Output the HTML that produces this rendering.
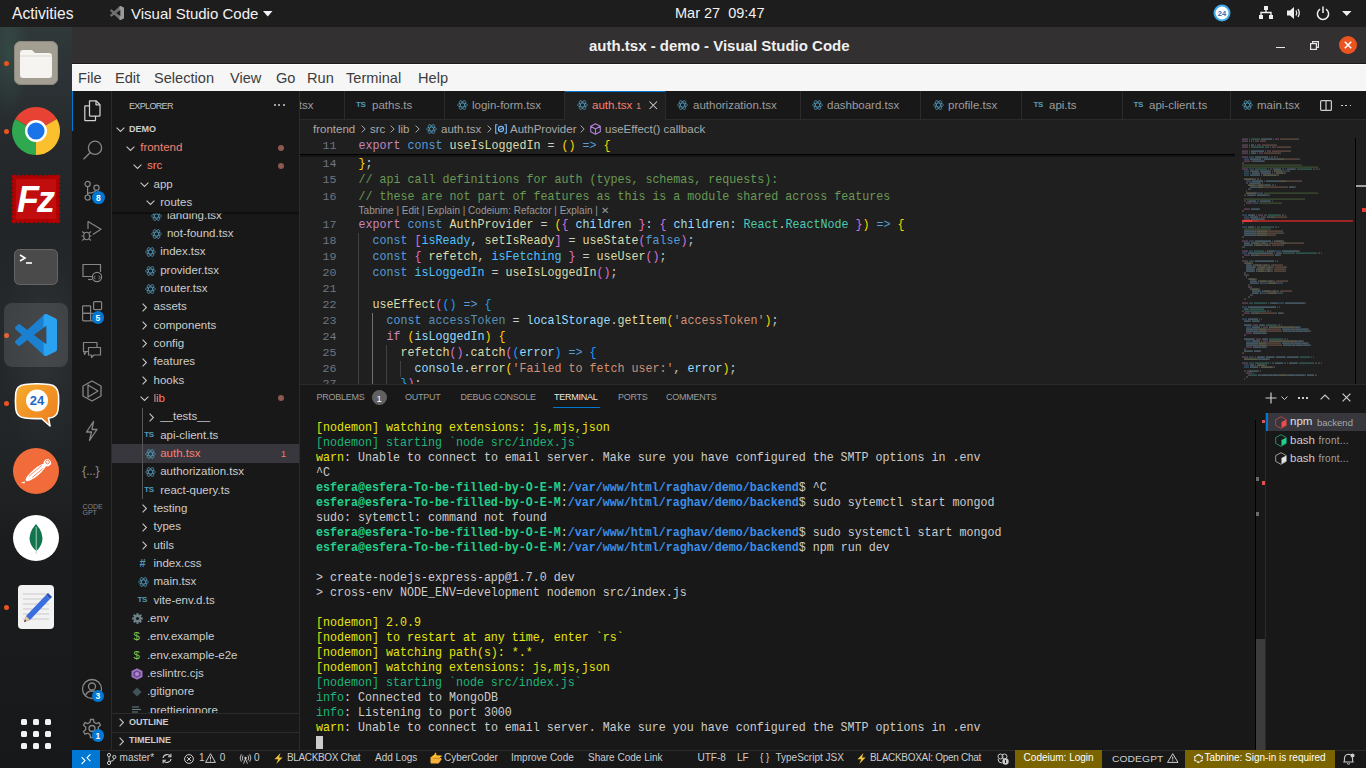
<!DOCTYPE html><html><head><meta charset="utf-8"><style>
html,body{margin:0;padding:0;width:1366px;height:768px;overflow:hidden;background:#1d1d1d;}
.t{position:absolute;white-space:pre;line-height:1;}
.r{position:absolute;}
svg{overflow:visible}
</style></head><body>
<div class="r" style="left:0px;top:0px;width:1366px;height:27px;background:#1d1d1d;"></div>
<div class="t" style="left:12px;top:5.79px;font-size:15.6px;color:#f2f2f2;font-weight:400;font-family:'Liberation Sans', sans-serif;">Activities</div>
<svg class="r" style="left:110px;top:6px;" width="14" height="14" viewBox="0 0 100 100"><defs><clipPath id="vr0"><rect x="68" y="0" width="40" height="100"/></clipPath></defs><path d="M96.46 10.8L75.86.87a6.23 6.23 0 0 0-7.1 1.2L29.35 38.04 12.17 25.01a4.16 4.16 0 0 0-5.31.24L1.35 30.26a4.17 4.17 0 0 0 0 6.16L16.25 50 1.35 63.58a4.17 4.17 0 0 0 0 6.16l5.51 5.01a4.16 4.16 0 0 0 5.31.24l17.18-13.03 39.41 35.96a6.22 6.22 0 0 0 7.1 1.2l20.6-9.92A6.25 6.25 0 0 0 100 83.57V16.43a6.25 6.25 0 0 0-3.54-5.63zM75.02 72.7L45.11 50l29.91-22.7z" fill="#6f6f6f"/><path d="M96.46 10.8L75.86.87a6.23 6.23 0 0 0-7.1 1.2L29.35 38.04 12.17 25.01a4.16 4.16 0 0 0-5.31.24L1.35 30.26a4.17 4.17 0 0 0 0 6.16L16.25 50 1.35 63.58a4.17 4.17 0 0 0 0 6.16l5.51 5.01a4.16 4.16 0 0 0 5.31.24l17.18-13.03 39.41 35.96a6.22 6.22 0 0 0 7.1 1.2l20.6-9.92A6.25 6.25 0 0 0 100 83.57V16.43a6.25 6.25 0 0 0-3.54-5.63zM75.02 72.7L45.11 50l29.91-22.7z" fill="#9a9a9a" clip-path="url(#vr0)"/></svg>
<div class="t" style="left:131px;top:6.3px;font-size:15px;color:#f2f2f2;font-weight:400;font-family:'Liberation Sans', sans-serif;">Visual Studio Code</div>
<svg class="r" style="left:262.5px;top:11px;" width="10" height="6" viewBox="0 0 10 6"><path d="M0 0 H9.5 L4.75 5.5Z" fill="#f2f2f2"/></svg>
<div class="t" style="left:675px;top:6.23px;font-size:14.5px;color:#f2f2f2;font-weight:400;font-family:'Liberation Sans', sans-serif;">Mar 27  09:47</div>
<svg class="r" style="left:1213px;top:4px;" width="18" height="18" viewBox="0 0 18 18"><circle cx="9" cy="9" r="8.5" fill="#3fa9e8"/><circle cx="9" cy="9" r="6.5" fill="#ffffff"/><text x="9" y="12" font-size="7.5" font-weight="700" text-anchor="middle" fill="#1c6fb8" font-family="Liberation Sans">24</text></svg>
<svg class="r" style="left:1259px;top:6px;" width="14" height="14" viewBox="0 0 14 14"><rect x="5" y="0" width="4" height="4" fill="#eee"/><rect x="0" y="9" width="4" height="4" fill="#eee"/><rect x="10" y="9" width="4" height="4" fill="#eee"/><path d="M7 4 V7 M2 9 V6.5 H12 V9" stroke="#eee" stroke-width="1.4" fill="none"/></svg>
<svg class="r" style="left:1287px;top:6px;" width="15" height="14" viewBox="0 0 15 14"><path d="M0 4.5 H3 L7 1 V13 L3 9.5 H0Z" fill="#eee"/><path d="M9 4.5 Q10.5 7 9 9.5 M11 3 Q13.5 7 11 11" stroke="#eee" stroke-width="1.3" fill="none"/></svg>
<svg class="r" style="left:1316px;top:6px;" width="14" height="15" viewBox="0 0 14 15"><path d="M4 3.2 A5.6 5.6 0 1 0 10 3.2" stroke="#eee" stroke-width="1.5" fill="none"/><path d="M7 0.5 V7" stroke="#eee" stroke-width="1.5"/></svg>
<svg class="r" style="left:1341.5px;top:11px;" width="10" height="6" viewBox="0 0 10 6"><path d="M0 0 H9.5 L4.75 5Z" fill="#eee"/></svg>
<div class="r" style="left:0;top:27px;width:72px;height:741px;background:linear-gradient(180deg,#30383a 0px,#2c3235 50px,#25292c 120px,#222528 200px,#25292b 300px,#222527 420px,#1b1c1d 520px,#171819 741px);"></div>
<div class="r" style="left:0;top:27px;width:30px;height:90px;background:radial-gradient(ellipse at 30% 30%,rgba(60,110,90,0.35),rgba(0,0,0,0) 70%);"></div>
<div class="r" style="left:0;top:260px;width:72px;height:200px;background:radial-gradient(ellipse at 60% 45%,rgba(120,125,125,0.12),rgba(0,0,0,0) 70%);"></div>
<div class="r" style="left:4px;top:61px;width:5px;height:5px;border-radius:50%;background:#e95420"></div>
<div class="r" style="left:4px;top:129px;width:5px;height:5px;border-radius:50%;background:#e95420"></div>
<div class="r" style="left:4px;top:333px;width:5px;height:5px;border-radius:50%;background:#e95420"></div>
<div class="r" style="left:4px;top:401px;width:5px;height:5px;border-radius:50%;background:#e95420"></div>
<div class="r" style="left:4px;top:605px;width:5px;height:5px;border-radius:50%;background:#e95420"></div>
<svg class="r" style="left:14px;top:41px;" width="44" height="44" viewBox="0 0 44 44"><rect x="0" y="0" width="44" height="44" rx="7" fill="#a39e92"/><rect x="0.5" y="0.5" width="43" height="43" rx="6.5" fill="none" stroke="#8d887c"/><path d="M6 12 Q6 9 9 9 H18 L21 12 H35 Q38 12 38 15 V34 Q38 37 35 37 H9 Q6 37 6 34Z" fill="#f6f4f0"/><path d="M6 15 H38" stroke="#dcd8d0" stroke-width="1"/></svg>
<svg class="r" style="left:12px;top:107px;" width="48" height="48" viewBox="0 0 48 48"><path d="M24 24 L3.22 12.00 A24 24 0 0 1 44.78 12.00 Z" fill="#e84235"/><path d="M24 24 L44.78 12.00 A24 24 0 0 1 24.00 48.00 Z" fill="#fbc02d"/><path d="M24 24 L24.00 48.00 A24 24 0 0 1 3.22 12.00 Z" fill="#2fa84f"/><path d="M24 13 L44.8 12 L43 18 Z" fill="#e84235" opacity="0"/><circle cx="24" cy="24" r="11" fill="#ffffff"/><circle cx="24" cy="24" r="8.6" fill="#1a73e8"/></svg>
<svg class="r" style="left:12px;top:175px;" width="48" height="48" viewBox="0 0 48 48"><rect x="2" y="2" width="44" height="44" fill="#b30000"/><circle cx="2.0" cy="2" r="2.2" fill="#b30000"/><circle cx="2.0" cy="46" r="2.2" fill="#b30000"/><circle cx="2" cy="2.0" r="2.2" fill="#b30000"/><circle cx="46" cy="2.0" r="2.2" fill="#b30000"/><circle cx="6.4" cy="2" r="2.2" fill="#b30000"/><circle cx="6.4" cy="46" r="2.2" fill="#b30000"/><circle cx="2" cy="6.4" r="2.2" fill="#b30000"/><circle cx="46" cy="6.4" r="2.2" fill="#b30000"/><circle cx="10.8" cy="2" r="2.2" fill="#b30000"/><circle cx="10.8" cy="46" r="2.2" fill="#b30000"/><circle cx="2" cy="10.8" r="2.2" fill="#b30000"/><circle cx="46" cy="10.8" r="2.2" fill="#b30000"/><circle cx="15.2" cy="2" r="2.2" fill="#b30000"/><circle cx="15.2" cy="46" r="2.2" fill="#b30000"/><circle cx="2" cy="15.2" r="2.2" fill="#b30000"/><circle cx="46" cy="15.2" r="2.2" fill="#b30000"/><circle cx="19.6" cy="2" r="2.2" fill="#b30000"/><circle cx="19.6" cy="46" r="2.2" fill="#b30000"/><circle cx="2" cy="19.6" r="2.2" fill="#b30000"/><circle cx="46" cy="19.6" r="2.2" fill="#b30000"/><circle cx="24.0" cy="2" r="2.2" fill="#b30000"/><circle cx="24.0" cy="46" r="2.2" fill="#b30000"/><circle cx="2" cy="24.0" r="2.2" fill="#b30000"/><circle cx="46" cy="24.0" r="2.2" fill="#b30000"/><circle cx="28.4" cy="2" r="2.2" fill="#b30000"/><circle cx="28.4" cy="46" r="2.2" fill="#b30000"/><circle cx="2" cy="28.4" r="2.2" fill="#b30000"/><circle cx="46" cy="28.4" r="2.2" fill="#b30000"/><circle cx="32.8" cy="2" r="2.2" fill="#b30000"/><circle cx="32.8" cy="46" r="2.2" fill="#b30000"/><circle cx="2" cy="32.8" r="2.2" fill="#b30000"/><circle cx="46" cy="32.8" r="2.2" fill="#b30000"/><circle cx="37.2" cy="2" r="2.2" fill="#b30000"/><circle cx="37.2" cy="46" r="2.2" fill="#b30000"/><circle cx="2" cy="37.2" r="2.2" fill="#b30000"/><circle cx="46" cy="37.2" r="2.2" fill="#b30000"/><circle cx="41.6" cy="2" r="2.2" fill="#b30000"/><circle cx="41.6" cy="46" r="2.2" fill="#b30000"/><circle cx="2" cy="41.6" r="2.2" fill="#b30000"/><circle cx="46" cy="41.6" r="2.2" fill="#b30000"/><circle cx="46.0" cy="2" r="2.2" fill="#b30000"/><circle cx="46.0" cy="46" r="2.2" fill="#b30000"/><circle cx="2" cy="46.0" r="2.2" fill="#b30000"/><circle cx="46" cy="46.0" r="2.2" fill="#b30000"/><rect x="4" y="4" width="40" height="40" fill="#c10d0d"/></svg>
<div class="t" style="left:17px;top:182px;font-size:36px;font-weight:700;font-style:italic;color:#fff;font-family:'Liberation Sans', sans-serif;letter-spacing:-2px;line-height:1">Fz</div>
<svg class="r" style="left:14px;top:249px;" width="44" height="36" viewBox="0 0 44 36"><rect x="0.5" y="0.5" width="43" height="35" rx="5" fill="#4a4a4a" stroke="#666" stroke-width="1"/><path d="M6 6 L11 9 L6 12" stroke="#fff" stroke-width="1.6" fill="none"/><path d="M12 14 H18" stroke="#fff" stroke-width="1.6"/></svg>
<div class="r" style="left:4px;top:303px;width:64px;height:64px;border-radius:8px;background:rgba(190,195,200,0.16)"></div>
<svg class="r" style="left:15px;top:314px;" width="42" height="42" viewBox="0 0 100 100"><defs><clipPath id="vr"><rect x="68" y="0" width="40" height="100"/></clipPath></defs><path d="M96.46 10.8L75.86.87a6.23 6.23 0 0 0-7.1 1.2L29.35 38.04 12.17 25.01a4.16 4.16 0 0 0-5.31.24L1.35 30.26a4.17 4.17 0 0 0 0 6.16L16.25 50 1.35 63.58a4.17 4.17 0 0 0 0 6.16l5.51 5.01a4.16 4.16 0 0 0 5.31.24l17.18-13.03 39.41 35.96a6.22 6.22 0 0 0 7.1 1.2l20.6-9.92A6.25 6.25 0 0 0 100 83.57V16.43a6.25 6.25 0 0 0-3.54-5.63zM75.02 72.7L45.11 50l29.91-22.7z" fill="#1b80d0"/><path d="M96.46 10.8L75.86.87a6.23 6.23 0 0 0-7.1 1.2L29.35 38.04 12.17 25.01a4.16 4.16 0 0 0-5.31.24L1.35 30.26a4.17 4.17 0 0 0 0 6.16L16.25 50 1.35 63.58a4.17 4.17 0 0 0 0 6.16l5.51 5.01a4.16 4.16 0 0 0 5.31.24l17.18-13.03 39.41 35.96a6.22 6.22 0 0 0 7.1 1.2l20.6-9.92A6.25 6.25 0 0 0 100 83.57V16.43a6.25 6.25 0 0 0-3.54-5.63zM75.02 72.7L45.11 50l29.91-22.7z" fill="#2aa2f0" clip-path="url(#vr)"/></svg>
<svg class="r" style="left:14px;top:383px;" width="46" height="45" viewBox="0 0 46 45"><defs><linearGradient id="bx" x1="0" y1="0" x2="1" y2="1"><stop offset="0" stop-color="#f6ad2e"/><stop offset="1" stop-color="#ec7a1c"/></linearGradient></defs><path d="M11 1.5 Q23 0 35 1.5 Q44 2.5 44.5 12 Q45 20 44 27 Q43 34.5 35 35 L34.5 35 L36 43 L27.5 35.5 Q19 36 11 35 Q2.5 34 1.8 26 Q1 18 1.8 10 Q2.5 2.5 11 1.5Z" fill="url(#bx)" stroke="#fff" stroke-width="1.6" stroke-linejoin="round"/><circle cx="23" cy="17.5" r="11" fill="#fff"/><text x="23" y="22.3" font-size="13" font-weight="700" text-anchor="middle" fill="#1f66c1" font-family="Liberation Sans">24</text></svg>
<svg class="r" style="left:13px;top:448px;" width="46" height="46" viewBox="0 0 46 46"><circle cx="23" cy="23" r="23" fill="#f26b3a"/><g transform="rotate(-40 23 23)"><ellipse cx="22" cy="24" rx="13" ry="3.6" fill="#fff"/><path d="M8 24 L4 22 L6 25 Z" fill="#fff"/><circle cx="37" cy="24" r="3.6" fill="#fff"/><circle cx="37.6" cy="23.5" r="1.8" fill="none" stroke="#f26b3a" stroke-width="0.8"/><path d="M14 22.5 H31 M16 25.5 H30" stroke="#f26b3a" stroke-width="0.7"/></g></svg>
<svg class="r" style="left:13px;top:515px;" width="46" height="46" viewBox="0 0 46 46"><circle cx="23" cy="23" r="23" fill="#ffffff"/><path d="M23 9 Q31 18 29 27 Q27 33 23.5 36 Q19 33 17 27 Q15 18 23 9Z" fill="#10744d"/><path d="M23.2 12 V39" stroke="#b7d5c0" stroke-width="0.9"/></svg>
<svg class="r" style="left:18px;top:585px;" width="36" height="44" viewBox="0 0 36 44"><rect x="0" y="0" width="36" height="44" rx="4" fill="#f2f2f2"/><g stroke="#c9c9c9" stroke-width="1"><path d="M5 9 H31 M5 14 H31 M5 19 H31 M5 24 H31 M5 29 H31 M5 34 H31"/></g><path d="M6 37 L8 31 L28 10 L32 14 L12 35 Z" fill="#3b6fe0"/><path d="M28 10 L32 14 L34 12 L30 8Z" fill="#2a4fb0"/><path d="M6 37 L8 31 L12 35Z" fill="#f2c89a"/><path d="M6 37 L7 34.5 L8.5 36Z" fill="#333"/></svg>
<div class="r" style="left:20.80px;top:718.80px;width:6.3px;height:6.3px;border-radius:1.5px;background:#f2f2f2"></div>
<div class="r" style="left:32.85px;top:718.80px;width:6.3px;height:6.3px;border-radius:1.5px;background:#f2f2f2"></div>
<div class="r" style="left:44.90px;top:718.80px;width:6.3px;height:6.3px;border-radius:1.5px;background:#f2f2f2"></div>
<div class="r" style="left:20.80px;top:730.90px;width:6.3px;height:6.3px;border-radius:1.5px;background:#f2f2f2"></div>
<div class="r" style="left:32.85px;top:730.90px;width:6.3px;height:6.3px;border-radius:1.5px;background:#f2f2f2"></div>
<div class="r" style="left:44.90px;top:730.90px;width:6.3px;height:6.3px;border-radius:1.5px;background:#f2f2f2"></div>
<div class="r" style="left:20.80px;top:743.00px;width:6.3px;height:6.3px;border-radius:1.5px;background:#f2f2f2"></div>
<div class="r" style="left:32.85px;top:743.00px;width:6.3px;height:6.3px;border-radius:1.5px;background:#f2f2f2"></div>
<div class="r" style="left:44.90px;top:743.00px;width:6.3px;height:6.3px;border-radius:1.5px;background:#f2f2f2"></div>
<div class="r" style="left:72px;top:27px;width:1294px;height:36px;background:#323030;"></div>
<div class="r" style="left:72px;top:63px;width:1294px;height:1px;background:#1c1c1c;"></div>
<div class="t" style="left:589px;top:38.3px;font-size:15px;color:#f0f0f0;font-weight:700;font-family:'Liberation Sans', sans-serif;">auth.tsx - demo - Visual Studio Code</div>
<div class="r" style="left:1276px;top:47px;width:8.5px;height:1.2px;background:#e6e6e6;"></div>
<svg class="r" style="left:1310px;top:41px;" width="9" height="9" viewBox="0 0 9 9"><rect x="0.6" y="2.6" width="5.8" height="5.8" fill="none" stroke="#e6e6e6" stroke-width="1.2"/><path d="M2.6 2.4 V0.6 H8.4 V6.4 H6.6" fill="none" stroke="#e6e6e6" stroke-width="1.2"/></svg>
<svg class="r" style="left:1339px;top:36px;" width="18" height="18" viewBox="0 0 18 18"><circle cx="9" cy="9" r="9" fill="#e95420"/><path d="M5.8 5.8 L12.2 12.2 M12.2 5.8 L5.8 12.2" stroke="#fff" stroke-width="1.6"/></svg>
<div class="r" style="left:72px;top:64px;width:1294px;height:27px;background:#f6f6f6;"></div>
<div class="r" style="left:72px;top:64px;width:1294px;height:1px;background:#ffffff;"></div>
<div class="t" style="left:78px;top:70.64px;font-size:14.6px;color:#3c3c3c;font-weight:400;font-family:'Liberation Sans', sans-serif;">File</div>
<div class="t" style="left:115px;top:70.64px;font-size:14.6px;color:#3c3c3c;font-weight:400;font-family:'Liberation Sans', sans-serif;">Edit</div>
<div class="t" style="left:154px;top:70.64px;font-size:14.6px;color:#3c3c3c;font-weight:400;font-family:'Liberation Sans', sans-serif;">Selection</div>
<div class="t" style="left:230px;top:70.64px;font-size:14.6px;color:#3c3c3c;font-weight:400;font-family:'Liberation Sans', sans-serif;">View</div>
<div class="t" style="left:276px;top:70.64px;font-size:14.6px;color:#3c3c3c;font-weight:400;font-family:'Liberation Sans', sans-serif;">Go</div>
<div class="t" style="left:307px;top:70.64px;font-size:14.6px;color:#3c3c3c;font-weight:400;font-family:'Liberation Sans', sans-serif;">Run</div>
<div class="t" style="left:346px;top:70.64px;font-size:14.6px;color:#3c3c3c;font-weight:400;font-family:'Liberation Sans', sans-serif;">Terminal</div>
<div class="t" style="left:418px;top:70.64px;font-size:14.6px;color:#3c3c3c;font-weight:400;font-family:'Liberation Sans', sans-serif;">Help</div>
<div class="r" style="left:72px;top:91px;width:1294px;height:659px;background:#181818;"></div>
<div class="r" style="left:72px;top:91px;width:40px;height:659px;background:#181818;"></div>
<div class="r" style="left:111px;top:91px;width:1px;height:659px;background:#2b2b2b;"></div>
<div class="r" style="left:72px;top:91px;width:1.2px;height:40px;background:#0078d4;"></div>
<svg class="r" style="left:81.0px;top:100.0px;" width="22" height="22" viewBox="0 0 22 22"><g fill="none" stroke="#d0d0d0" stroke-width="1.25" stroke-linejoin="round"><path d="M8.5 0.8 H15 L19 4.8 V15.5 Q19 16 18.5 16 H9 Q8.5 16 8.5 15.5 Z"/><path d="M15 0.8 V4.8 H19"/><path d="M8.5 5.8 H4.3 Q3.8 5.8 3.8 6.3 V20.2 Q3.8 20.7 4.3 20.7 H14 Q14.5 20.7 14.5 20.2 V16"/></g></svg>
<svg class="r" style="left:81.0px;top:139.0px;" width="22" height="22" viewBox="0 0 22 22"><g fill="none" stroke="#868686" stroke-width="1.3"><circle cx="14" cy="8.8" r="6.6"/><path d="M9.3 13.5 L2.5 20.3"/></g></svg>
<svg class="r" style="left:81.0px;top:180.0px;" width="22" height="22" viewBox="0 0 22 22"><g fill="none" stroke="#868686" stroke-width="1.2"><circle cx="6.6" cy="4" r="2.6"/><circle cx="6.6" cy="17.6" r="2.6"/><circle cx="15.5" cy="7.7" r="2.6"/><path d="M6.6 6.6 V15"/><path d="M15 10.3 Q14 13 6.8 13.2"/></g></svg>
<svg class="r" style="left:81.0px;top:220.0px;" width="22" height="22" viewBox="0 0 22 22"><g fill="none" stroke="#868686" stroke-width="1.2" stroke-linejoin="round"><path d="M7 9 V1.5 L20 9.3 L11.8 14.5"/></g><g fill="none" stroke="#868686" stroke-width="1.1"><ellipse cx="5.6" cy="16" rx="2.9" ry="3.8"/><path d="M2.7 16 H0.6 M8.5 16 H10.6 M3 13 L1.2 11.5 M8.2 13 L10 11.5 M3 19 L1.2 20.5 M8.2 19 L10 20.5"/></g></svg>
<svg class="r" style="left:81.0px;top:262.0px;" width="22" height="22" viewBox="0 0 22 22"><g fill="none" stroke="#868686" stroke-width="1.2"><path d="M11 14.5 H2 V2.5 H19.5 V10"/><path d="M7 17.5 H11"/><circle cx="16" cy="15" r="4.6"/><path d="M14.3 13.8 L13 15.5 L14.3 17.2 M17.7 13.8 L19 15.5 L17.7 17.2" stroke-width="1"/></g></svg>
<svg class="r" style="left:81.0px;top:300.0px;" width="22" height="22" viewBox="0 0 22 22"><g fill="none" stroke="#868686" stroke-width="1.2"><rect x="1.6" y="5.8" width="8" height="7.5" rx="0.8"/><rect x="1.6" y="13.3" width="8" height="7.5" rx="0.8"/><rect x="9.6" y="13.3" width="7" height="7.5" rx="0.8"/><rect x="12.6" y="1.6" width="8" height="8" rx="1"/></g></svg>
<svg class="r" style="left:81.0px;top:340.0px;" width="22" height="22" viewBox="0 0 22 22"><g fill="none" stroke="#868686" stroke-width="1.2" stroke-linejoin="round"><path d="M7 11.5 H2.5 V2.5 H16 V7"/><path d="M3 11.5 L3.5 14.5 L5.5 11.5"/><path d="M7.5 7.5 H19.5 V15 H13 L10.5 17.5 V15 H7.5 Z"/></g></svg>
<svg class="r" style="left:81.0px;top:380.0px;" width="22" height="22" viewBox="0 0 22 22"><g fill="none" stroke="#868686" stroke-width="1.3" stroke-linejoin="round"><path d="M11 1 L20 6 V16 L11 21 L2 16 V6 Z"/><path d="M7 5 L17 11 L7 17 Z"/></g></svg>
<svg class="r" style="left:81.0px;top:420.0px;" width="22" height="22" viewBox="0 0 22 22"><path d="M12.5 1.5 L5.5 12 H10.5 L8.5 20.5 L16 9.5 H11 Z" fill="none" stroke="#868686" stroke-width="1.3" stroke-linejoin="round"/></svg>
<div class="t" style="left:82px;top:463.5px;font-size:13.5px;color:#868686;font-family:'Liberation Sans', sans-serif;letter-spacing:-0.6px">{...}</div>
<div class="t" style="left:82.5px;top:503.5px;font-size:7px;font-weight:400;color:#868686;font-family:'Liberation Sans', sans-serif;line-height:6.5px;letter-spacing:0px;transform:scaleX(1.0);transform-origin:left">CODE<br>GPT</div>
<svg class="r" style="left:81.0px;top:678.0px;" width="22" height="22" viewBox="0 0 22 22"><g fill="none" stroke="#868686" stroke-width="1.3"><circle cx="11" cy="11" r="9.5"/><circle cx="11" cy="8.5" r="3.5"/><path d="M4.5 17.5 Q6 13 11 13 Q16 13 17.5 17.5"/></g></svg>
<svg class="r" style="left:81.0px;top:718.0px;" width="22" height="22" viewBox="0 0 22 22"><g fill="none" stroke="#868686" stroke-width="1.3"><path d="M9.5 1.5 H12.5 L13 4.3 L15.3 5.6 L18 4.6 L19.5 7.2 L17.3 9 V11.7 L19.5 13.5 L18 16.1 L15.3 15.1 L13 16.4 L12.5 19.5 H9.5 L9 16.4 L6.7 15.1 L4 16.1 L2.5 13.5 L4.7 11.7 V9 L2.5 7.2 L4 4.6 L6.7 5.6 L9 4.3 Z"/><circle cx="11" cy="10.5" r="3"/></g></svg>
<div class="r" style="left:92.1px;top:191.1px;width:12.8px;height:12.8px;border-radius:50%;background:#0078d4"></div>
<div class="t" style="left:96.0px;top:193.5px;font-size:8.5px;color:#ffffff;font-weight:700;font-family:'Liberation Sans', sans-serif;">8</div>
<div class="r" style="left:91.6px;top:311.1px;width:12.8px;height:12.8px;border-radius:50%;background:#0078d4"></div>
<div class="t" style="left:95.5px;top:313.5px;font-size:8.5px;color:#ffffff;font-weight:700;font-family:'Liberation Sans', sans-serif;">5</div>
<div class="r" style="left:91.6px;top:689.6px;width:12.8px;height:12.8px;border-radius:50%;background:#0078d4"></div>
<div class="t" style="left:95.5px;top:692.0px;font-size:8.5px;color:#ffffff;font-weight:700;font-family:'Liberation Sans', sans-serif;">3</div>
<div class="r" style="left:91.6px;top:729.1px;width:12.8px;height:12.8px;border-radius:50%;background:#0078d4"></div>
<div class="t" style="left:95.5px;top:731.5px;font-size:8.5px;color:#ffffff;font-weight:700;font-family:'Liberation Sans', sans-serif;">1</div>
<div class="t" style="left:129px;top:101.68px;font-size:9px;color:#c4c4c4;font-weight:400;font-family:'Liberation Sans', sans-serif;letter-spacing:-0.65px">EXPLORER</div>
<div class="r" style="left:274.3px;top:104.3px;width:2px;height:2px;background:#cccccc;border-radius:1px"></div>
<div class="r" style="left:278.40000000000003px;top:104.3px;width:2px;height:2px;background:#cccccc;border-radius:1px"></div>
<div class="r" style="left:282.5px;top:104.3px;width:2px;height:2px;background:#cccccc;border-radius:1px"></div>
<svg class="r" style="left:116px;top:127px;" width="9" height="5" viewBox="0 0 9 5"><path d="M0.6 0.6 L4.5 4.4 L8.4 0.6" fill="none" stroke="#c5c5c5" stroke-width="1.1"/></svg>
<div class="t" style="left:129px;top:125.18px;font-size:9px;color:#cccccc;font-weight:700;font-family:'Liberation Sans', sans-serif;">DEMO</div>
<div class="r" style="left:112px;top:212px;width:187px;height:501px;overflow:hidden">
<svg class="r" style="left:39.40px;top:-1.43px" width="11" height="10" viewBox="0 0 11 10"><g fill="none" stroke="#4f94b4" stroke-width="0.75"><ellipse cx="5.5" cy="5" rx="5" ry="2"/><ellipse cx="5.5" cy="5" rx="5" ry="2" transform="rotate(60 5.5 5)"/><ellipse cx="5.5" cy="5" rx="5" ry="2" transform="rotate(-60 5.5 5)"/></g></svg>
<div class="t" style="left:54.90px;top:-2.46px;font-size:11.5px;color:#cccccc;font-weight:400;font-family:'Liberation Sans', sans-serif;">landing.tsx</div>
<svg class="r" style="left:39.40px;top:16.90px" width="11" height="10" viewBox="0 0 11 10"><g fill="none" stroke="#4f94b4" stroke-width="0.75"><ellipse cx="5.5" cy="5" rx="5" ry="2"/><ellipse cx="5.5" cy="5" rx="5" ry="2" transform="rotate(60 5.5 5)"/><ellipse cx="5.5" cy="5" rx="5" ry="2" transform="rotate(-60 5.5 5)"/></g></svg>
<div class="t" style="left:54.90px;top:15.87px;font-size:11.5px;color:#cccccc;font-weight:400;font-family:'Liberation Sans', sans-serif;">not-found.tsx</div>
<svg class="r" style="left:32.70px;top:35.24px" width="11" height="10" viewBox="0 0 11 10"><g fill="none" stroke="#4f94b4" stroke-width="0.75"><ellipse cx="5.5" cy="5" rx="5" ry="2"/><ellipse cx="5.5" cy="5" rx="5" ry="2" transform="rotate(60 5.5 5)"/><ellipse cx="5.5" cy="5" rx="5" ry="2" transform="rotate(-60 5.5 5)"/></g></svg>
<div class="t" style="left:48.20px;top:34.20px;font-size:11.5px;color:#cccccc;font-weight:400;font-family:'Liberation Sans', sans-serif;">index.tsx</div>
<svg class="r" style="left:32.70px;top:53.57px" width="11" height="10" viewBox="0 0 11 10"><g fill="none" stroke="#4f94b4" stroke-width="0.75"><ellipse cx="5.5" cy="5" rx="5" ry="2"/><ellipse cx="5.5" cy="5" rx="5" ry="2" transform="rotate(60 5.5 5)"/><ellipse cx="5.5" cy="5" rx="5" ry="2" transform="rotate(-60 5.5 5)"/></g></svg>
<div class="t" style="left:48.20px;top:52.53px;font-size:11.5px;color:#cccccc;font-weight:400;font-family:'Liberation Sans', sans-serif;">provider.tsx</div>
<svg class="r" style="left:32.70px;top:71.90px" width="11" height="10" viewBox="0 0 11 10"><g fill="none" stroke="#4f94b4" stroke-width="0.75"><ellipse cx="5.5" cy="5" rx="5" ry="2"/><ellipse cx="5.5" cy="5" rx="5" ry="2" transform="rotate(60 5.5 5)"/><ellipse cx="5.5" cy="5" rx="5" ry="2" transform="rotate(-60 5.5 5)"/></g></svg>
<div class="t" style="left:48.20px;top:70.87px;font-size:11.5px;color:#cccccc;font-weight:400;font-family:'Liberation Sans', sans-serif;">router.tsx</div>
<svg class="r" style="left:30.00px;top:90.74px" width="5" height="9" viewBox="0 0 5 9"><path d="M0.6 0.6 L4.4 4.5 L0.6 8.4" fill="none" stroke="#c5c5c5" stroke-width="1.1"/></svg>
<div class="t" style="left:41.50px;top:89.20px;font-size:11.5px;color:#cccccc;font-weight:400;font-family:'Liberation Sans', sans-serif;">assets</div>
<svg class="r" style="left:30.00px;top:109.07px" width="5" height="9" viewBox="0 0 5 9"><path d="M0.6 0.6 L4.4 4.5 L0.6 8.4" fill="none" stroke="#c5c5c5" stroke-width="1.1"/></svg>
<div class="t" style="left:41.50px;top:107.53px;font-size:11.5px;color:#cccccc;font-weight:400;font-family:'Liberation Sans', sans-serif;">components</div>
<svg class="r" style="left:30.00px;top:127.40px" width="5" height="9" viewBox="0 0 5 9"><path d="M0.6 0.6 L4.4 4.5 L0.6 8.4" fill="none" stroke="#c5c5c5" stroke-width="1.1"/></svg>
<div class="t" style="left:41.50px;top:125.87px;font-size:11.5px;color:#cccccc;font-weight:400;font-family:'Liberation Sans', sans-serif;">config</div>
<svg class="r" style="left:30.00px;top:145.73px" width="5" height="9" viewBox="0 0 5 9"><path d="M0.6 0.6 L4.4 4.5 L0.6 8.4" fill="none" stroke="#c5c5c5" stroke-width="1.1"/></svg>
<div class="t" style="left:41.50px;top:144.20px;font-size:11.5px;color:#cccccc;font-weight:400;font-family:'Liberation Sans', sans-serif;">features</div>
<svg class="r" style="left:30.00px;top:164.07px" width="5" height="9" viewBox="0 0 5 9"><path d="M0.6 0.6 L4.4 4.5 L0.6 8.4" fill="none" stroke="#c5c5c5" stroke-width="1.1"/></svg>
<div class="t" style="left:41.50px;top:162.53px;font-size:11.5px;color:#cccccc;font-weight:400;font-family:'Liberation Sans', sans-serif;">hooks</div>
<svg class="r" style="left:27.50px;top:184.40px" width="9" height="5" viewBox="0 0 9 5"><path d="M0.6 0.6 L4.5 4.4 L8.4 0.6" fill="none" stroke="#c5c5c5" stroke-width="1.1"/></svg>
<div class="t" style="left:41.50px;top:180.87px;font-size:11.5px;color:#f88070;font-weight:400;font-family:'Liberation Sans', sans-serif;">lib</div>
<div class="r" style="left:166px;top:183.40px;width:6px;height:6px;border-radius:50%;background:#8c5850"></div>
<svg class="r" style="left:36.70px;top:200.73px" width="5" height="9" viewBox="0 0 5 9"><path d="M0.6 0.6 L4.4 4.5 L0.6 8.4" fill="none" stroke="#c5c5c5" stroke-width="1.1"/></svg>
<div class="t" style="left:48.20px;top:199.20px;font-size:11.5px;color:#cccccc;font-weight:400;font-family:'Liberation Sans', sans-serif;">__tests__</div>
<div class="t" style="left:32.20px;top:219.07px;font-size:8px;font-weight:700;color:#519aba;font-family:'Liberation Sans', sans-serif;letter-spacing:-0.3px">TS</div>
<div class="t" style="left:48.20px;top:217.53px;font-size:11.5px;color:#cccccc;font-weight:400;font-family:'Liberation Sans', sans-serif;">api-client.ts</div>
<div class="r" style="left:0px;top:232.40px;width:187px;height:18.33px;background:#37373d"></div>
<div class="t" style="left:169.00px;top:237.98px;font-size:9px;color:#f88070;font-weight:400;font-family:'Liberation Sans', sans-serif;">1</div>
<svg class="r" style="left:32.70px;top:236.90px" width="11" height="10" viewBox="0 0 11 10"><g fill="none" stroke="#4f94b4" stroke-width="0.75"><ellipse cx="5.5" cy="5" rx="5" ry="2"/><ellipse cx="5.5" cy="5" rx="5" ry="2" transform="rotate(60 5.5 5)"/><ellipse cx="5.5" cy="5" rx="5" ry="2" transform="rotate(-60 5.5 5)"/></g></svg>
<div class="t" style="left:48.20px;top:235.86px;font-size:11.5px;color:#f88070;font-weight:400;font-family:'Liberation Sans', sans-serif;">auth.tsx</div>
<svg class="r" style="left:32.70px;top:255.23px" width="11" height="10" viewBox="0 0 11 10"><g fill="none" stroke="#4f94b4" stroke-width="0.75"><ellipse cx="5.5" cy="5" rx="5" ry="2"/><ellipse cx="5.5" cy="5" rx="5" ry="2" transform="rotate(60 5.5 5)"/><ellipse cx="5.5" cy="5" rx="5" ry="2" transform="rotate(-60 5.5 5)"/></g></svg>
<div class="t" style="left:48.20px;top:254.20px;font-size:11.5px;color:#cccccc;font-weight:400;font-family:'Liberation Sans', sans-serif;">authorization.tsx</div>
<div class="t" style="left:32.20px;top:274.06px;font-size:8px;font-weight:700;color:#519aba;font-family:'Liberation Sans', sans-serif;letter-spacing:-0.3px">TS</div>
<div class="t" style="left:48.20px;top:272.53px;font-size:11.5px;color:#cccccc;font-weight:400;font-family:'Liberation Sans', sans-serif;">react-query.ts</div>
<svg class="r" style="left:30.00px;top:292.40px" width="5" height="9" viewBox="0 0 5 9"><path d="M0.6 0.6 L4.4 4.5 L0.6 8.4" fill="none" stroke="#c5c5c5" stroke-width="1.1"/></svg>
<div class="t" style="left:41.50px;top:290.86px;font-size:11.5px;color:#cccccc;font-weight:400;font-family:'Liberation Sans', sans-serif;">testing</div>
<svg class="r" style="left:30.00px;top:310.73px" width="5" height="9" viewBox="0 0 5 9"><path d="M0.6 0.6 L4.4 4.5 L0.6 8.4" fill="none" stroke="#c5c5c5" stroke-width="1.1"/></svg>
<div class="t" style="left:41.50px;top:309.20px;font-size:11.5px;color:#cccccc;font-weight:400;font-family:'Liberation Sans', sans-serif;">types</div>
<svg class="r" style="left:30.00px;top:329.06px" width="5" height="9" viewBox="0 0 5 9"><path d="M0.6 0.6 L4.4 4.5 L0.6 8.4" fill="none" stroke="#c5c5c5" stroke-width="1.1"/></svg>
<div class="t" style="left:41.50px;top:327.53px;font-size:11.5px;color:#cccccc;font-weight:400;font-family:'Liberation Sans', sans-serif;">utils</div>
<div class="t" style="left:27.50px;top:346.29px;font-size:11px;color:#519aba;font-weight:700;font-family:'Liberation Sans', sans-serif;">#</div>
<div class="t" style="left:41.50px;top:345.86px;font-size:11.5px;color:#cccccc;font-weight:400;font-family:'Liberation Sans', sans-serif;">index.css</div>
<svg class="r" style="left:26.00px;top:365.23px" width="11" height="10" viewBox="0 0 11 10"><g fill="none" stroke="#4f94b4" stroke-width="0.75"><ellipse cx="5.5" cy="5" rx="5" ry="2"/><ellipse cx="5.5" cy="5" rx="5" ry="2" transform="rotate(60 5.5 5)"/><ellipse cx="5.5" cy="5" rx="5" ry="2" transform="rotate(-60 5.5 5)"/></g></svg>
<div class="t" style="left:41.50px;top:364.20px;font-size:11.5px;color:#cccccc;font-weight:400;font-family:'Liberation Sans', sans-serif;">main.tsx</div>
<div class="t" style="left:25.50px;top:384.06px;font-size:8px;font-weight:700;color:#519aba;font-family:'Liberation Sans', sans-serif;letter-spacing:-0.3px">TS</div>
<div class="t" style="left:41.50px;top:382.53px;font-size:11.5px;color:#cccccc;font-weight:400;font-family:'Liberation Sans', sans-serif;">vite-env.d.ts</div>
<svg class="r" style="left:19.90px;top:401.40px" width="11" height="11" viewBox="0 0 11 11"><g transform="translate(5.5 5.5)"><circle r="3.8" fill="#6d8086"/><rect x="-1.1" y="-5.3" width="2.2" height="2.4" fill="#6d8086" transform="rotate(0)"/><rect x="-1.1" y="-5.3" width="2.2" height="2.4" fill="#6d8086" transform="rotate(45)"/><rect x="-1.1" y="-5.3" width="2.2" height="2.4" fill="#6d8086" transform="rotate(90)"/><rect x="-1.1" y="-5.3" width="2.2" height="2.4" fill="#6d8086" transform="rotate(135)"/><rect x="-1.1" y="-5.3" width="2.2" height="2.4" fill="#6d8086" transform="rotate(180)"/><rect x="-1.1" y="-5.3" width="2.2" height="2.4" fill="#6d8086" transform="rotate(225)"/><rect x="-1.1" y="-5.3" width="2.2" height="2.4" fill="#6d8086" transform="rotate(270)"/><rect x="-1.1" y="-5.3" width="2.2" height="2.4" fill="#6d8086" transform="rotate(315)"/><circle r="1.6" fill="#181818"/></g></svg>
<div class="t" style="left:34.90px;top:400.86px;font-size:11.5px;color:#cccccc;font-weight:400;font-family:'Liberation Sans', sans-serif;">.env</div>
<div class="t" style="left:21.40px;top:419.19px;font-size:11.5px;color:#8dc149;font-weight:400;font-family:'Liberation Sans', sans-serif;">$</div>
<div class="t" style="left:34.90px;top:419.19px;font-size:11.5px;color:#cccccc;font-weight:400;font-family:'Liberation Sans', sans-serif;">.env.example</div>
<div class="t" style="left:21.40px;top:437.53px;font-size:11.5px;color:#8dc149;font-weight:400;font-family:'Liberation Sans', sans-serif;">$</div>
<div class="t" style="left:34.90px;top:437.53px;font-size:11.5px;color:#cccccc;font-weight:400;font-family:'Liberation Sans', sans-serif;">.env.example-e2e</div>
<svg class="r" style="left:19.40px;top:455.89px" width="12" height="12" viewBox="0 0 12 12"><path d="M6 1.2 L10.6 3.6 V8.4 L6 10.8 L1.4 8.4 V3.6Z" fill="#6a4a8a" stroke="#a074c4" stroke-width="1.8" stroke-linejoin="round"/><circle cx="6" cy="6" r="2" fill="#b28ad6"/></svg>
<div class="t" style="left:34.90px;top:455.86px;font-size:11.5px;color:#cccccc;font-weight:400;font-family:'Liberation Sans', sans-serif;">.eslintrc.cjs</div>
<svg class="r" style="left:19.90px;top:475.23px" width="10" height="10" viewBox="0 0 10 10"><path d="M5 0.5 L9.5 5 L5 9.5 L0.5 5Z" fill="#41535b"/></svg>
<div class="t" style="left:34.90px;top:474.19px;font-size:11.5px;color:#cccccc;font-weight:400;font-family:'Liberation Sans', sans-serif;">.gitignore</div>
<svg class="r" style="left:19.90px;top:494.06px" width="9" height="8" viewBox="0 0 9 8"><path d="M0 1 H7 M0 3.5 H9 M0 6 H6 M0 8 H8" stroke="#6d8086" stroke-width="1"/></svg>
<div class="t" style="left:34.90px;top:492.53px;font-size:11.5px;color:#cccccc;font-weight:400;font-family:'Liberation Sans', sans-serif;">.prettierignore</div>
<div class="r" style="left:30px;top:195.73px;width:1px;height:91.66px;background:#585858"></div>
</div>
<div class="r" style="left:112px;top:138.5px;width:187px;height:73.5px;background:#181818;"></div>
<svg class="r" style="left:126.19999999999999px;top:145.5px;" width="9" height="5" viewBox="0 0 9 5"><path d="M0.6 0.6 L4.5 4.4 L8.4 0.6" fill="none" stroke="#c5c5c5" stroke-width="1.1"/></svg>
<div class="t" style="left:140.2px;top:141.97px;font-size:11.5px;color:#f88070;font-weight:400;font-family:'Liberation Sans', sans-serif;">frontend</div>
<div class="r" style="left:278px;top:144.50px;width:6px;height:6px;border-radius:50%;background:#8c5850"></div>
<svg class="r" style="left:132.9px;top:163.833px;" width="9" height="5" viewBox="0 0 9 5"><path d="M0.6 0.6 L4.5 4.4 L8.4 0.6" fill="none" stroke="#c5c5c5" stroke-width="1.1"/></svg>
<div class="t" style="left:146.9px;top:160.3px;font-size:11.5px;color:#f88070;font-weight:400;font-family:'Liberation Sans', sans-serif;">src</div>
<div class="r" style="left:278px;top:162.83px;width:6px;height:6px;border-radius:50%;background:#8c5850"></div>
<svg class="r" style="left:139.5px;top:182.166px;" width="9" height="5" viewBox="0 0 9 5"><path d="M0.6 0.6 L4.5 4.4 L8.4 0.6" fill="none" stroke="#c5c5c5" stroke-width="1.1"/></svg>
<div class="t" style="left:153.5px;top:178.63px;font-size:11.5px;color:#cccccc;font-weight:400;font-family:'Liberation Sans', sans-serif;">app</div>
<svg class="r" style="left:146.2px;top:200.499px;" width="9" height="5" viewBox="0 0 9 5"><path d="M0.6 0.6 L4.5 4.4 L8.4 0.6" fill="none" stroke="#c5c5c5" stroke-width="1.1"/></svg>
<div class="t" style="left:160.2px;top:196.96px;font-size:11.5px;color:#cccccc;font-weight:400;font-family:'Liberation Sans', sans-serif;">routes</div>
<div class="r" style="left:112px;top:211.5px;width:187px;height:1.2px;background:#0e0e0e;"></div>
<div class="r" style="left:112px;top:212.7px;width:187px;height:1.5px;background:rgba(0,0,0,0.35);"></div>
<div class="r" style="left:112px;top:713.3px;width:187px;height:1px;background:#2b2b2b;"></div>
<div class="r" style="left:112px;top:713.3px;width:187px;height:36.4px;background:#181818;"></div>
<div class="r" style="left:112px;top:713.3px;width:187px;height:1px;background:#2b2b2b;"></div>
<div class="r" style="left:112px;top:731.6px;width:187px;height:1px;background:#2b2b2b;"></div>
<svg class="r" style="left:119px;top:718px;" width="5" height="9" viewBox="0 0 5 9"><path d="M0.6 0.6 L4.4 4.5 L0.6 8.4" fill="none" stroke="#c5c5c5" stroke-width="1.1"/></svg>
<div class="t" style="left:129px;top:717.68px;font-size:9px;color:#cccccc;font-weight:700;font-family:'Liberation Sans', sans-serif;">OUTLINE</div>
<svg class="r" style="left:119px;top:736.5px;" width="5" height="9" viewBox="0 0 5 9"><path d="M0.6 0.6 L4.4 4.5 L0.6 8.4" fill="none" stroke="#c5c5c5" stroke-width="1.1"/></svg>
<div class="t" style="left:129px;top:735.88px;font-size:9px;color:#cccccc;font-weight:700;font-family:'Liberation Sans', sans-serif;">TIMELINE</div>
<div class="r" style="left:299px;top:91px;width:1px;height:659px;background:#2b2b2b;"></div>
<div class="r" style="left:300px;top:91px;width:1066px;height:293px;background:#1f1f1f;"></div>
<div class="r" style="left:300px;top:91px;width:1066px;height:29px;background:#181818;"></div>
<div class="r" style="left:300px;top:119px;width:1066px;height:1px;background:#2b2b2b;"></div>
<div class="r" style="left:300px;top:91px;width:44px;height:28px;overflow:hidden"><div class="t" style="left:-14px;top:9.27px;font-size:11.5px;color:#9d9d9d;font-family:'Liberation Sans', sans-serif">m.tsx</div></div>
<div class="r" style="left:344px;top:91px;width:1px;height:28px;background:#2b2b2b;"></div>
<div class="r" style="left:444px;top:91px;width:1px;height:28px;background:#2b2b2b;"></div>
<div class="r" style="left:564px;top:91px;width:1px;height:28px;background:#2b2b2b;"></div>
<div class="r" style="left:665px;top:91px;width:1px;height:28px;background:#2b2b2b;"></div>
<div class="r" style="left:799.5px;top:91px;width:1px;height:28px;background:#2b2b2b;"></div>
<div class="r" style="left:920px;top:91px;width:1px;height:28px;background:#2b2b2b;"></div>
<div class="r" style="left:1021px;top:91px;width:1px;height:28px;background:#2b2b2b;"></div>
<div class="r" style="left:1121.5px;top:91px;width:1px;height:28px;background:#2b2b2b;"></div>
<div class="r" style="left:1229.5px;top:91px;width:1px;height:28px;background:#2b2b2b;"></div>
<div class="r" style="left:565px;top:91px;width:100px;height:29px;background:#1f1f1f;"></div>
<div class="r" style="left:565px;top:91px;width:100px;height:1px;background:#0078d4;"></div>
<div class="t" style="left:356px;top:101px;font-size:8px;font-weight:700;color:#519aba;font-family:'Liberation Sans', sans-serif;letter-spacing:-0.3px">TS</div>
<div class="t" style="left:372px;top:100.27px;font-size:11.5px;color:#9d9d9d;font-weight:400;font-family:'Liberation Sans', sans-serif;">paths.ts</div>
<svg class="r" style="left:457px;top:100px;" width="11" height="10" viewBox="0 0 11 10"><g fill="none" stroke="#4f94b4" stroke-width="0.75"><ellipse cx="5.5" cy="5" rx="5" ry="2"/><ellipse cx="5.5" cy="5" rx="5" ry="2" transform="rotate(60 5.5 5)"/><ellipse cx="5.5" cy="5" rx="5" ry="2" transform="rotate(-60 5.5 5)"/></g></svg>
<div class="t" style="left:472px;top:100.27px;font-size:11.5px;color:#9d9d9d;font-weight:400;font-family:'Liberation Sans', sans-serif;">login-form.tsx</div>
<svg class="r" style="left:577px;top:100px;" width="11" height="10" viewBox="0 0 11 10"><g fill="none" stroke="#4f94b4" stroke-width="0.75"><ellipse cx="5.5" cy="5" rx="5" ry="2"/><ellipse cx="5.5" cy="5" rx="5" ry="2" transform="rotate(60 5.5 5)"/><ellipse cx="5.5" cy="5" rx="5" ry="2" transform="rotate(-60 5.5 5)"/></g></svg>
<div class="t" style="left:592px;top:100.27px;font-size:11.5px;color:#f88070;font-weight:400;font-family:'Liberation Sans', sans-serif;">auth.tsx</div>
<svg class="r" style="left:677px;top:100px;" width="11" height="10" viewBox="0 0 11 10"><g fill="none" stroke="#4f94b4" stroke-width="0.75"><ellipse cx="5.5" cy="5" rx="5" ry="2"/><ellipse cx="5.5" cy="5" rx="5" ry="2" transform="rotate(60 5.5 5)"/><ellipse cx="5.5" cy="5" rx="5" ry="2" transform="rotate(-60 5.5 5)"/></g></svg>
<div class="t" style="left:693px;top:100.27px;font-size:11.5px;color:#9d9d9d;font-weight:400;font-family:'Liberation Sans', sans-serif;">authorization.tsx</div>
<svg class="r" style="left:811.5px;top:100px;" width="11" height="10" viewBox="0 0 11 10"><g fill="none" stroke="#4f94b4" stroke-width="0.75"><ellipse cx="5.5" cy="5" rx="5" ry="2"/><ellipse cx="5.5" cy="5" rx="5" ry="2" transform="rotate(60 5.5 5)"/><ellipse cx="5.5" cy="5" rx="5" ry="2" transform="rotate(-60 5.5 5)"/></g></svg>
<div class="t" style="left:827px;top:100.27px;font-size:11.5px;color:#9d9d9d;font-weight:400;font-family:'Liberation Sans', sans-serif;">dashboard.tsx</div>
<svg class="r" style="left:932.5px;top:100px;" width="11" height="10" viewBox="0 0 11 10"><g fill="none" stroke="#4f94b4" stroke-width="0.75"><ellipse cx="5.5" cy="5" rx="5" ry="2"/><ellipse cx="5.5" cy="5" rx="5" ry="2" transform="rotate(60 5.5 5)"/><ellipse cx="5.5" cy="5" rx="5" ry="2" transform="rotate(-60 5.5 5)"/></g></svg>
<div class="t" style="left:948px;top:100.27px;font-size:11.5px;color:#9d9d9d;font-weight:400;font-family:'Liberation Sans', sans-serif;">profile.tsx</div>
<div class="t" style="left:1033.5px;top:101px;font-size:8px;font-weight:700;color:#519aba;font-family:'Liberation Sans', sans-serif;letter-spacing:-0.3px">TS</div>
<div class="t" style="left:1049px;top:100.27px;font-size:11.5px;color:#9d9d9d;font-weight:400;font-family:'Liberation Sans', sans-serif;">api.ts</div>
<div class="t" style="left:1133.5px;top:101px;font-size:8px;font-weight:700;color:#519aba;font-family:'Liberation Sans', sans-serif;letter-spacing:-0.3px">TS</div>
<div class="t" style="left:1149px;top:100.27px;font-size:11.5px;color:#9d9d9d;font-weight:400;font-family:'Liberation Sans', sans-serif;">api-client.ts</div>
<svg class="r" style="left:1241.5px;top:100px;" width="11" height="10" viewBox="0 0 11 10"><g fill="none" stroke="#4f94b4" stroke-width="0.75"><ellipse cx="5.5" cy="5" rx="5" ry="2"/><ellipse cx="5.5" cy="5" rx="5" ry="2" transform="rotate(60 5.5 5)"/><ellipse cx="5.5" cy="5" rx="5" ry="2" transform="rotate(-60 5.5 5)"/></g></svg>
<div class="t" style="left:1257px;top:100.27px;font-size:11.5px;color:#9d9d9d;font-weight:400;font-family:'Liberation Sans', sans-serif;">main.tsx</div>
<div class="t" style="left:636.3px;top:102.1px;font-size:8.5px;color:#f88070;font-weight:400;font-family:'Liberation Sans', sans-serif;">1</div>
<svg class="r" style="left:649px;top:101.3px;" width="8.5" height="8.5" viewBox="0 0 8.5 8.5"><path d="M0.5 0.5 L8 8 M8 0.5 L0.5 8" stroke="#d0d0d0" stroke-width="1.05"/></svg>
<div class="r" style="left:1312px;top:91px;width:54px;height:28px;background:#181818;"></div>
<svg class="r" style="left:1319.5px;top:99.5px;" width="12" height="11" viewBox="0 0 12 11"><rect x="0.6" y="0.6" width="10.8" height="9.8" rx="1" fill="none" stroke="#cccccc" stroke-width="1.2"/><path d="M6 0.6 V10.4" stroke="#cccccc" stroke-width="1.2"/></svg>
<div class="r" style="left:1341.0px;top:104.6px;width:1.7px;height:1.7px;background:#cccccc;"></div>
<div class="r" style="left:1345.3px;top:104.6px;width:1.7px;height:1.7px;background:#cccccc;"></div>
<div class="r" style="left:1349.6px;top:104.6px;width:1.7px;height:1.7px;background:#cccccc;"></div>
<div class="t" style="left:313px;top:124.07px;font-size:11.5px;color:#a9a9a9;font-weight:400;font-family:'Liberation Sans', sans-serif;">frontend</div>
<svg class="r" style="left:360.5px;top:125.2px;" width="5" height="8" viewBox="0 0 5 8"><path d="M0.6 0.6 L4.2 4 L0.6 7.4" fill="none" stroke="#a9a9a9" stroke-width="1"/></svg>
<div class="t" style="left:370px;top:124.07px;font-size:11.5px;color:#a9a9a9;font-weight:400;font-family:'Liberation Sans', sans-serif;">src</div>
<svg class="r" style="left:389.5px;top:125.2px;" width="5" height="8" viewBox="0 0 5 8"><path d="M0.6 0.6 L4.2 4 L0.6 7.4" fill="none" stroke="#a9a9a9" stroke-width="1"/></svg>
<div class="t" style="left:398px;top:124.07px;font-size:11.5px;color:#a9a9a9;font-weight:400;font-family:'Liberation Sans', sans-serif;">lib</div>
<svg class="r" style="left:414.5px;top:125.2px;" width="5" height="8" viewBox="0 0 5 8"><path d="M0.6 0.6 L4.2 4 L0.6 7.4" fill="none" stroke="#a9a9a9" stroke-width="1"/></svg>
<svg class="r" style="left:425.5px;top:123.5px;" width="11" height="10" viewBox="0 0 11 10"><g fill="none" stroke="#4f94b4" stroke-width="0.75"><ellipse cx="5.5" cy="5" rx="5" ry="2"/><ellipse cx="5.5" cy="5" rx="5" ry="2" transform="rotate(60 5.5 5)"/><ellipse cx="5.5" cy="5" rx="5" ry="2" transform="rotate(-60 5.5 5)"/></g></svg>
<div class="t" style="left:441px;top:124.07px;font-size:11.5px;color:#a9a9a9;font-weight:400;font-family:'Liberation Sans', sans-serif;">auth.tsx</div>
<svg class="r" style="left:486.5px;top:125.2px;" width="5" height="8" viewBox="0 0 5 8"><path d="M0.6 0.6 L4.2 4 L0.6 7.4" fill="none" stroke="#a9a9a9" stroke-width="1"/></svg>
<svg class="r" style="left:495px;top:123.5px;" width="12" height="10" viewBox="0 0 12 10"><path d="M2.5 0.7 H0.7 V9.3 H2.5 M9.5 0.7 H11.3 V9.3 H9.5" fill="none" stroke="#75beff" stroke-width="1.1"/><circle cx="6" cy="5" r="2.6" fill="none" stroke="#75beff" stroke-width="1.1"/><path d="M3.8 6.2 L8.4 3.8" stroke="#75beff" stroke-width="1"/></svg>
<div class="t" style="left:510px;top:124.07px;font-size:11.5px;color:#a9a9a9;font-weight:400;font-family:'Liberation Sans', sans-serif;">AuthProvider</div>
<svg class="r" style="left:579.5px;top:125.2px;" width="5" height="8" viewBox="0 0 5 8"><path d="M0.6 0.6 L4.2 4 L0.6 7.4" fill="none" stroke="#a9a9a9" stroke-width="1"/></svg>
<svg class="r" style="left:590px;top:122.5px;" width="11" height="12" viewBox="0 0 11 12"><path d="M5.5 0.7 L10.3 3.3 V8.7 L5.5 11.3 L0.7 8.7 V3.3 Z M0.7 3.3 L5.5 6 L10.3 3.3 M5.5 6 V11.3" fill="none" stroke="#b180d7" stroke-width="1.1" stroke-linejoin="round"/></svg>
<div class="t" style="left:605px;top:124.07px;font-size:11.5px;color:#a9a9a9;font-weight:400;font-family:'Liberation Sans', sans-serif;">useEffect() callback</div>
<div class="r" style="left:358px;top:233.4px;width:1px;height:159.3px;background:#404040;"></div>
<div class="r" style="left:372px;top:313.0px;width:1px;height:79.7px;background:#707070;"></div>
<div class="r" style="left:386px;top:344.9px;width:1px;height:47.8px;background:#404040;"></div>
<div class="r" style="left:400px;top:360.8px;width:1px;height:16.0px;background:#404040;"></div>
<div class="t" style="left:322.6px;top:159.35px;font-size:11.67px;color:#6e7681;font-weight:400;font-family:'Liberation Mono', monospace;">14</div>
<div class="t" style="left:358.6px;top:159.35px;font-size:11.67px;font-family:'Liberation Mono', monospace;color:#cccccc;transform:scaleY(1.08);transform-origin:0 9px"><span style="color:#ffd700">}</span><span style="color:#cccccc">;</span></div>
<div class="t" style="left:322.6px;top:175.45px;font-size:11.67px;color:#6e7681;font-weight:400;font-family:'Liberation Mono', monospace;">15</div>
<div class="t" style="left:358.6px;top:175.45px;font-size:11.67px;font-family:'Liberation Mono', monospace;color:#cccccc;transform:scaleY(1.08);transform-origin:0 9px"><span style="color:#6a9955">// api call definitions for auth (types, schemas, requests):</span></div>
<div class="t" style="left:322.6px;top:191.55px;font-size:11.67px;color:#6e7681;font-weight:400;font-family:'Liberation Mono', monospace;">16</div>
<div class="t" style="left:358.6px;top:191.55px;font-size:11.67px;font-family:'Liberation Mono', monospace;color:#cccccc;transform:scaleY(1.08);transform-origin:0 9px"><span style="color:#6a9955">// these are not part of features as this is a module shared across features</span></div>
<div class="t" style="left:322.6px;top:220.25px;font-size:11.67px;color:#6e7681;font-weight:400;font-family:'Liberation Mono', monospace;">17</div>
<div class="t" style="left:358.6px;top:220.25px;font-size:11.67px;font-family:'Liberation Mono', monospace;color:#cccccc;transform:scaleY(1.08);transform-origin:0 9px"><span style="color:#c586c0">export</span><span style="color:#cccccc"> </span><span style="color:#569cd6">const</span><span style="color:#cccccc"> </span><span style="color:#dcdcaa">AuthProvider</span><span style="color:#cccccc"> = </span><span style="color:#ffd700">(</span><span style="color:#da70d6">{</span><span style="color:#cccccc"> </span><span style="color:#9cdcfe">children</span><span style="color:#cccccc"> </span><span style="color:#da70d6">}</span><span style="color:#cccccc">: </span><span style="color:#da70d6">{</span><span style="color:#cccccc"> </span><span style="color:#9cdcfe">children</span><span style="color:#cccccc">: </span><span style="color:#4ec9b0">React</span><span style="color:#cccccc">.</span><span style="color:#4ec9b0">ReactNode</span><span style="color:#cccccc"> </span><span style="color:#da70d6">}</span><span style="color:#ffd700">)</span><span style="color:#cccccc"> </span><span style="color:#569cd6">=&gt;</span><span style="color:#cccccc"> </span><span style="color:#ffd700">{</span></div>
<div class="t" style="left:322.6px;top:236.17px;font-size:11.67px;color:#6e7681;font-weight:400;font-family:'Liberation Mono', monospace;">18</div>
<div class="t" style="left:358.6px;top:236.17px;font-size:11.67px;font-family:'Liberation Mono', monospace;color:#cccccc;transform:scaleY(1.08);transform-origin:0 9px"><span style="color:#cccccc">  </span><span style="color:#569cd6">const</span><span style="color:#cccccc"> </span><span style="color:#da70d6">[</span><span style="color:#4fc1ff">isReady</span><span style="color:#cccccc">, </span><span style="color:#dcdcaa">setIsReady</span><span style="color:#da70d6">]</span><span style="color:#cccccc"> = </span><span style="color:#dcdcaa">useState</span><span style="color:#da70d6">(</span><span style="color:#569cd6">false</span><span style="color:#da70d6">)</span><span style="color:#cccccc">;</span></div>
<div class="t" style="left:322.6px;top:252.09px;font-size:11.67px;color:#6e7681;font-weight:400;font-family:'Liberation Mono', monospace;">19</div>
<div class="t" style="left:358.6px;top:252.09px;font-size:11.67px;font-family:'Liberation Mono', monospace;color:#cccccc;transform:scaleY(1.08);transform-origin:0 9px"><span style="color:#cccccc">  </span><span style="color:#569cd6">const</span><span style="color:#cccccc"> </span><span style="color:#da70d6">{</span><span style="color:#cccccc"> </span><span style="color:#dcdcaa">refetch</span><span style="color:#cccccc">, </span><span style="color:#4fc1ff">isFetching</span><span style="color:#cccccc"> </span><span style="color:#da70d6">}</span><span style="color:#cccccc"> = </span><span style="color:#dcdcaa">useUser</span><span style="color:#da70d6">()</span><span style="color:#cccccc">;</span></div>
<div class="t" style="left:322.6px;top:268.01px;font-size:11.67px;color:#6e7681;font-weight:400;font-family:'Liberation Mono', monospace;">20</div>
<div class="t" style="left:358.6px;top:268.01px;font-size:11.67px;font-family:'Liberation Mono', monospace;color:#cccccc;transform:scaleY(1.08);transform-origin:0 9px"><span style="color:#cccccc">  </span><span style="color:#569cd6">const</span><span style="color:#cccccc"> </span><span style="color:#4fc1ff">isLoggedIn</span><span style="color:#cccccc"> = </span><span style="color:#dcdcaa">useIsLoggedIn</span><span style="color:#da70d6">()</span><span style="color:#cccccc">;</span></div>
<div class="t" style="left:322.6px;top:283.93px;font-size:11.67px;color:#6e7681;font-weight:400;font-family:'Liberation Mono', monospace;">21</div>
<div class="t" style="left:358.6px;top:283.93px;font-size:11.67px;font-family:'Liberation Mono', monospace;color:#cccccc;transform:scaleY(1.08);transform-origin:0 9px"></div>
<div class="t" style="left:322.6px;top:299.85px;font-size:11.67px;color:#6e7681;font-weight:400;font-family:'Liberation Mono', monospace;">22</div>
<div class="t" style="left:358.6px;top:299.85px;font-size:11.67px;font-family:'Liberation Mono', monospace;color:#cccccc;transform:scaleY(1.08);transform-origin:0 9px"><span style="color:#cccccc">  </span><span style="color:#dcdcaa">useEffect</span><span style="color:#da70d6">(</span><span style="color:#179fff">()</span><span style="color:#cccccc"> </span><span style="color:#569cd6">=&gt;</span><span style="color:#cccccc"> </span><span style="color:#179fff">{</span></div>
<div class="t" style="left:322.6px;top:315.77px;font-size:11.67px;color:#6e7681;font-weight:400;font-family:'Liberation Mono', monospace;">23</div>
<div class="t" style="left:358.6px;top:315.77px;font-size:11.67px;font-family:'Liberation Mono', monospace;color:#cccccc;transform:scaleY(1.08);transform-origin:0 9px"><span style="color:#cccccc">    </span><span style="color:#569cd6">const</span><span style="color:#cccccc"> </span><span style="color:#5790b8">accessToken</span><span style="color:#cccccc"> = </span><span style="color:#9cdcfe">localStorage</span><span style="color:#cccccc">.</span><span style="color:#dcdcaa">getItem</span><span style="color:#ffd700">(</span><span style="color:#ce9178">&#x27;accessToken&#x27;</span><span style="color:#ffd700">)</span><span style="color:#cccccc">;</span></div>
<div class="t" style="left:322.6px;top:331.69px;font-size:11.67px;color:#6e7681;font-weight:400;font-family:'Liberation Mono', monospace;">24</div>
<div class="t" style="left:358.6px;top:331.69px;font-size:11.67px;font-family:'Liberation Mono', monospace;color:#cccccc;transform:scaleY(1.08);transform-origin:0 9px"><span style="color:#cccccc">    </span><span style="color:#c586c0">if</span><span style="color:#cccccc"> </span><span style="color:#ffd700">(</span><span style="color:#9cdcfe">isLoggedIn</span><span style="color:#ffd700">)</span><span style="color:#cccccc"> </span><span style="color:#ffd700">{</span></div>
<div class="t" style="left:322.6px;top:347.61px;font-size:11.67px;color:#6e7681;font-weight:400;font-family:'Liberation Mono', monospace;">25</div>
<div class="t" style="left:358.6px;top:347.61px;font-size:11.67px;font-family:'Liberation Mono', monospace;color:#cccccc;transform:scaleY(1.08);transform-origin:0 9px"><span style="color:#cccccc">      </span><span style="color:#dcdcaa">refetch</span><span style="color:#da70d6">()</span><span style="color:#cccccc">.</span><span style="color:#dcdcaa">catch</span><span style="color:#da70d6">(</span><span style="color:#179fff">(</span><span style="color:#9cdcfe">error</span><span style="color:#179fff">)</span><span style="color:#cccccc"> </span><span style="color:#569cd6">=&gt;</span><span style="color:#cccccc"> </span><span style="color:#179fff">{</span></div>
<div class="t" style="left:322.6px;top:363.53px;font-size:11.67px;color:#6e7681;font-weight:400;font-family:'Liberation Mono', monospace;">26</div>
<div class="t" style="left:358.6px;top:363.53px;font-size:11.67px;font-family:'Liberation Mono', monospace;color:#cccccc;transform:scaleY(1.08);transform-origin:0 9px"><span style="color:#cccccc">        </span><span style="color:#9cdcfe">console</span><span style="color:#cccccc">.</span><span style="color:#dcdcaa">error</span><span style="color:#ffd700">(</span><span style="color:#ce9178">&#x27;Failed to fetch user:&#x27;</span><span style="color:#cccccc">, </span><span style="color:#9cdcfe">error</span><span style="color:#ffd700">)</span><span style="color:#cccccc">;</span></div>
<div class="t" style="left:322.6px;top:379.45px;font-size:11.67px;color:#6e7681;font-weight:400;font-family:'Liberation Mono', monospace;">27</div>
<div class="t" style="left:358.6px;top:379.45px;font-size:11.67px;font-family:'Liberation Mono', monospace;color:#cccccc;transform:scaleY(1.08);transform-origin:0 9px"><span style="color:#cccccc">      </span><span style="color:#179fff">}</span><span style="color:#da70d6">)</span><span style="color:#cccccc">;</span></div>
<div class="t" style="left:358.6px;top:205.53px;font-size:10px;color:#999999;font-weight:400;font-family:'Liberation Sans', sans-serif;">Tabnine | Edit | Explain | Codeium: Refactor | Explain | ✕</div>
<div class="r" style="left:300px;top:138.5px;width:935px;height:15.5px;background:#1f1f1f;"></div>
<div class="t" style="left:322.6px;top:140.65px;font-size:11.67px;color:#6e7681;font-weight:400;font-family:'Liberation Mono', monospace;">11</div>
<div class="t" style="left:358.6px;top:140.65px;font-size:11.67px;font-family:'Liberation Mono', monospace;color:#cccccc;transform:scaleY(1.08);transform-origin:0 9px"><span style="color:#c586c0">export</span><span style="color:#cccccc"> </span><span style="color:#569cd6">const</span><span style="color:#cccccc"> </span><span style="color:#dcdcaa">useIsLoggedIn</span><span style="color:#cccccc"> = </span><span style="color:#ffd700">()</span><span style="color:#cccccc"> </span><span style="color:#569cd6">=&gt;</span><span style="color:#cccccc"> </span><span style="color:#ffd700">{</span></div>
<div class="r" style="left:300px;top:153.5px;width:935px;height:1.5px;background:#000000;"></div>
<div class="r" style="left:300px;top:155px;width:935px;height:1.5px;background:rgba(0,0,0,0.35);"></div>
<svg class="r" style="left:1236px;top:137px;opacity:0.42" width="118" height="247" viewBox="0 0 118 247"><rect x="6" y="1.5" width="6" height="1.2" fill="#c586c0"/><rect x="13" y="1.5" width="1" height="1.2" fill="#a0a0a0"/><rect x="15" y="1.5" width="8" height="1.2" fill="#4ec9b0"/><rect x="23" y="1.5" width="1" height="1.2" fill="#a0a0a0"/><rect x="25" y="1.5" width="11" height="1.2" fill="#9cdcfe"/><rect x="37" y="1.5" width="1" height="1.2" fill="#a0a0a0"/><rect x="39" y="1.5" width="4" height="1.2" fill="#c586c0"/><rect x="44" y="1.5" width="18" height="1.2" fill="#ce9178"/><rect x="62" y="1.5" width="1" height="1.2" fill="#a0a0a0"/><rect x="6" y="3.5" width="6" height="1.2" fill="#c586c0"/><rect x="13" y="3.5" width="1" height="1.2" fill="#a0a0a0"/><rect x="15" y="3.5" width="1" height="1.2" fill="#9cdcfe"/><rect x="17" y="3.5" width="1" height="1.2" fill="#a0a0a0"/><rect x="19" y="3.5" width="4" height="1.2" fill="#c586c0"/><rect x="24" y="3.5" width="5" height="1.2" fill="#ce9178"/><rect x="29" y="3.5" width="1" height="1.2" fill="#a0a0a0"/><rect x="6" y="7.5" width="6" height="1.2" fill="#c586c0"/><rect x="13" y="7.5" width="1" height="1.2" fill="#a0a0a0"/><rect x="15" y="7.5" width="3" height="1.2" fill="#9cdcfe"/><rect x="19" y="7.5" width="1" height="1.2" fill="#a0a0a0"/><rect x="21" y="7.5" width="4" height="1.2" fill="#c586c0"/><rect x="26" y="7.5" width="14" height="1.2" fill="#ce9178"/><rect x="40" y="7.5" width="1" height="1.2" fill="#a0a0a0"/><rect x="6" y="9.5" width="6" height="1.2" fill="#c586c0"/><rect x="13" y="9.5" width="1" height="1.2" fill="#a0a0a0"/><rect x="15" y="9.5" width="12" height="1.2" fill="#4ec9b0"/><rect x="27" y="9.5" width="1" height="1.2" fill="#a0a0a0"/><rect x="29" y="9.5" width="4" height="1.2" fill="#4ec9b0"/><rect x="34" y="9.5" width="1" height="1.2" fill="#a0a0a0"/><rect x="36" y="9.5" width="4" height="1.2" fill="#c586c0"/><rect x="41" y="9.5" width="13" height="1.2" fill="#ce9178"/><rect x="54" y="9.5" width="1" height="1.2" fill="#a0a0a0"/><rect x="6" y="13.5" width="6" height="1.2" fill="#c586c0"/><rect x="13" y="13.5" width="1" height="1.2" fill="#a0a0a0"/><rect x="15" y="13.5" width="13" height="1.2" fill="#9cdcfe"/><rect x="29" y="13.5" width="1" height="1.2" fill="#a0a0a0"/><rect x="31" y="13.5" width="4" height="1.2" fill="#c586c0"/><rect x="36" y="13.5" width="18" height="1.2" fill="#ce9178"/><rect x="54" y="13.5" width="1" height="1.2" fill="#a0a0a0"/><rect x="6" y="15.5" width="6" height="1.2" fill="#c586c0"/><rect x="13" y="15.5" width="1" height="1.2" fill="#a0a0a0"/><rect x="15" y="15.5" width="5" height="1.2" fill="#9cdcfe"/><rect x="21" y="15.5" width="1" height="1.2" fill="#a0a0a0"/><rect x="23" y="15.5" width="4" height="1.2" fill="#c586c0"/><rect x="28" y="15.5" width="16" height="1.2" fill="#ce9178"/><rect x="44" y="15.5" width="1" height="1.2" fill="#a0a0a0"/><rect x="6" y="19.5" width="6" height="1.2" fill="#c586c0"/><rect x="13" y="19.5" width="5" height="1.2" fill="#569cd6"/><rect x="19" y="19.5" width="13" height="1.2" fill="#9cdcfe"/><rect x="33" y="19.5" width="1" height="1.2" fill="#a0a0a0"/><rect x="35" y="19.5" width="1" height="1.2" fill="#a0a0a0"/><rect x="36" y="19.5" width="1" height="1.2" fill="#a0a0a0"/><rect x="38" y="19.5" width="1" height="1.2" fill="#a0a0a0"/><rect x="39" y="19.5" width="1" height="1.2" fill="#a0a0a0"/><rect x="41" y="19.5" width="1" height="1.2" fill="#a0a0a0"/><rect x="8" y="21.5" width="5" height="1.2" fill="#569cd6"/><rect x="14" y="21.5" width="11" height="1.2" fill="#9cdcfe"/><rect x="26" y="21.5" width="1" height="1.2" fill="#a0a0a0"/><rect x="28" y="21.5" width="12" height="1.2" fill="#9cdcfe"/><rect x="40" y="21.5" width="1" height="1.2" fill="#a0a0a0"/><rect x="41" y="21.5" width="7" height="1.2" fill="#dcdcaa"/><rect x="48" y="21.5" width="1" height="1.2" fill="#a0a0a0"/><rect x="49" y="21.5" width="13" height="1.2" fill="#ce9178"/><rect x="62" y="21.5" width="1" height="1.2" fill="#a0a0a0"/><rect x="63" y="21.5" width="1" height="1.2" fill="#a0a0a0"/><rect x="8" y="23.5" width="6" height="1.2" fill="#c586c0"/><rect x="15" y="23.5" width="1" height="1.2" fill="#a0a0a0"/><rect x="16" y="23.5" width="1" height="1.2" fill="#a0a0a0"/><rect x="17" y="23.5" width="11" height="1.2" fill="#9cdcfe"/><rect x="28" y="23.5" width="1" height="1.2" fill="#a0a0a0"/><rect x="6" y="25.5" width="1" height="1.2" fill="#a0a0a0"/><rect x="7" y="25.5" width="1" height="1.2" fill="#a0a0a0"/><rect x="6" y="27.5" width="60" height="1.2" fill="#6a9955"/><rect x="6" y="29.5" width="76" height="1.2" fill="#6a9955"/><rect x="6" y="31.5" width="6" height="1.2" fill="#c586c0"/><rect x="13" y="31.5" width="5" height="1.2" fill="#569cd6"/><rect x="19" y="31.5" width="12" height="1.2" fill="#4ec9b0"/><rect x="32" y="31.5" width="1" height="1.2" fill="#a0a0a0"/><rect x="34" y="31.5" width="1" height="1.2" fill="#a0a0a0"/><rect x="35" y="31.5" width="1" height="1.2" fill="#a0a0a0"/><rect x="37" y="31.5" width="8" height="1.2" fill="#9cdcfe"/><rect x="46" y="31.5" width="1" height="1.2" fill="#a0a0a0"/><rect x="47" y="31.5" width="1" height="1.2" fill="#a0a0a0"/><rect x="49" y="31.5" width="1" height="1.2" fill="#a0a0a0"/><rect x="51" y="31.5" width="8" height="1.2" fill="#9cdcfe"/><rect x="59" y="31.5" width="1" height="1.2" fill="#a0a0a0"/><rect x="61" y="31.5" width="5" height="1.2" fill="#4ec9b0"/><rect x="66" y="31.5" width="1" height="1.2" fill="#a0a0a0"/><rect x="67" y="31.5" width="9" height="1.2" fill="#4ec9b0"/><rect x="77" y="31.5" width="1" height="1.2" fill="#a0a0a0"/><rect x="78" y="31.5" width="1" height="1.2" fill="#a0a0a0"/><rect x="80" y="31.5" width="1" height="1.2" fill="#a0a0a0"/><rect x="81" y="31.5" width="1" height="1.2" fill="#a0a0a0"/><rect x="83" y="31.5" width="1" height="1.2" fill="#a0a0a0"/><rect x="8" y="33.5" width="5" height="1.2" fill="#569cd6"/><rect x="14" y="33.5" width="1" height="1.2" fill="#a0a0a0"/><rect x="15" y="33.5" width="7" height="1.2" fill="#9cdcfe"/><rect x="22" y="33.5" width="1" height="1.2" fill="#a0a0a0"/><rect x="24" y="33.5" width="10" height="1.2" fill="#9cdcfe"/><rect x="34" y="33.5" width="1" height="1.2" fill="#a0a0a0"/><rect x="36" y="33.5" width="1" height="1.2" fill="#a0a0a0"/><rect x="38" y="33.5" width="8" height="1.2" fill="#dcdcaa"/><rect x="46" y="33.5" width="1" height="1.2" fill="#a0a0a0"/><rect x="47" y="33.5" width="5" height="1.2" fill="#569cd6"/><rect x="52" y="33.5" width="1" height="1.2" fill="#a0a0a0"/><rect x="53" y="33.5" width="1" height="1.2" fill="#a0a0a0"/><rect x="8" y="35.5" width="5" height="1.2" fill="#569cd6"/><rect x="14" y="35.5" width="1" height="1.2" fill="#a0a0a0"/><rect x="16" y="35.5" width="7" height="1.2" fill="#9cdcfe"/><rect x="23" y="35.5" width="1" height="1.2" fill="#a0a0a0"/><rect x="25" y="35.5" width="10" height="1.2" fill="#9cdcfe"/><rect x="36" y="35.5" width="1" height="1.2" fill="#a0a0a0"/><rect x="38" y="35.5" width="1" height="1.2" fill="#a0a0a0"/><rect x="40" y="35.5" width="7" height="1.2" fill="#dcdcaa"/><rect x="47" y="35.5" width="1" height="1.2" fill="#a0a0a0"/><rect x="48" y="35.5" width="1" height="1.2" fill="#a0a0a0"/><rect x="49" y="35.5" width="1" height="1.2" fill="#a0a0a0"/><rect x="8" y="37.5" width="5" height="1.2" fill="#569cd6"/><rect x="14" y="37.5" width="10" height="1.2" fill="#9cdcfe"/><rect x="25" y="37.5" width="1" height="1.2" fill="#a0a0a0"/><rect x="27" y="37.5" width="13" height="1.2" fill="#dcdcaa"/><rect x="40" y="37.5" width="1" height="1.2" fill="#a0a0a0"/><rect x="41" y="37.5" width="1" height="1.2" fill="#a0a0a0"/><rect x="42" y="37.5" width="1" height="1.2" fill="#a0a0a0"/><rect x="8" y="41.5" width="9" height="1.2" fill="#dcdcaa"/><rect x="17" y="41.5" width="1" height="1.2" fill="#a0a0a0"/><rect x="18" y="41.5" width="1" height="1.2" fill="#a0a0a0"/><rect x="19" y="41.5" width="1" height="1.2" fill="#a0a0a0"/><rect x="21" y="41.5" width="1" height="1.2" fill="#a0a0a0"/><rect x="22" y="41.5" width="1" height="1.2" fill="#a0a0a0"/><rect x="24" y="41.5" width="1" height="1.2" fill="#a0a0a0"/><rect x="10" y="43.5" width="5" height="1.2" fill="#569cd6"/><rect x="16" y="43.5" width="11" height="1.2" fill="#9cdcfe"/><rect x="28" y="43.5" width="1" height="1.2" fill="#a0a0a0"/><rect x="30" y="43.5" width="12" height="1.2" fill="#9cdcfe"/><rect x="42" y="43.5" width="1" height="1.2" fill="#a0a0a0"/><rect x="43" y="43.5" width="7" height="1.2" fill="#dcdcaa"/><rect x="50" y="43.5" width="1" height="1.2" fill="#a0a0a0"/><rect x="51" y="43.5" width="13" height="1.2" fill="#ce9178"/><rect x="64" y="43.5" width="1" height="1.2" fill="#a0a0a0"/><rect x="65" y="43.5" width="1" height="1.2" fill="#a0a0a0"/><rect x="10" y="45.5" width="2" height="1.2" fill="#c586c0"/><rect x="13" y="45.5" width="1" height="1.2" fill="#a0a0a0"/><rect x="14" y="45.5" width="10" height="1.2" fill="#9cdcfe"/><rect x="24" y="45.5" width="1" height="1.2" fill="#a0a0a0"/><rect x="26" y="45.5" width="1" height="1.2" fill="#a0a0a0"/><rect x="12" y="47.5" width="7" height="1.2" fill="#dcdcaa"/><rect x="19" y="47.5" width="1" height="1.2" fill="#a0a0a0"/><rect x="20" y="47.5" width="1" height="1.2" fill="#a0a0a0"/><rect x="21" y="47.5" width="1" height="1.2" fill="#a0a0a0"/><rect x="22" y="47.5" width="5" height="1.2" fill="#dcdcaa"/><rect x="27" y="47.5" width="1" height="1.2" fill="#a0a0a0"/><rect x="28" y="47.5" width="1" height="1.2" fill="#a0a0a0"/><rect x="29" y="47.5" width="5" height="1.2" fill="#9cdcfe"/><rect x="34" y="47.5" width="1" height="1.2" fill="#a0a0a0"/><rect x="36" y="47.5" width="1" height="1.2" fill="#a0a0a0"/><rect x="37" y="47.5" width="1" height="1.2" fill="#a0a0a0"/><rect x="39" y="47.5" width="1" height="1.2" fill="#a0a0a0"/><rect x="14" y="49.5" width="7" height="1.2" fill="#9cdcfe"/><rect x="21" y="49.5" width="1" height="1.2" fill="#a0a0a0"/><rect x="22" y="49.5" width="5" height="1.2" fill="#dcdcaa"/><rect x="27" y="49.5" width="1" height="1.2" fill="#a0a0a0"/><rect x="28" y="49.5" width="23" height="1.2" fill="#ce9178"/><rect x="51" y="49.5" width="1" height="1.2" fill="#a0a0a0"/><rect x="53" y="49.5" width="5" height="1.2" fill="#9cdcfe"/><rect x="58" y="49.5" width="1" height="1.2" fill="#a0a0a0"/><rect x="59" y="49.5" width="1" height="1.2" fill="#a0a0a0"/><rect x="12" y="51.5" width="1" height="1.2" fill="#a0a0a0"/><rect x="13" y="51.5" width="1" height="1.2" fill="#a0a0a0"/><rect x="14" y="51.5" width="1" height="1.2" fill="#a0a0a0"/><rect x="10" y="53.5" width="1" height="1.2" fill="#a0a0a0"/><rect x="10" y="55.5" width="10" height="1.2" fill="#dcdcaa"/><rect x="20" y="55.5" width="1" height="1.2" fill="#a0a0a0"/><rect x="21" y="55.5" width="4" height="1.2" fill="#569cd6"/><rect x="25" y="55.5" width="1" height="1.2" fill="#a0a0a0"/><rect x="26" y="55.5" width="1" height="1.2" fill="#a0a0a0"/><rect x="28" y="55.5" width="54" height="1.2" fill="#6a9955"/><rect x="8" y="57.5" width="1" height="1.2" fill="#a0a0a0"/><rect x="9" y="57.5" width="1" height="1.2" fill="#a0a0a0"/><rect x="11" y="57.5" width="1" height="1.2" fill="#a0a0a0"/><rect x="12" y="57.5" width="7" height="1.2" fill="#9cdcfe"/><rect x="19" y="57.5" width="1" height="1.2" fill="#a0a0a0"/><rect x="21" y="57.5" width="10" height="1.2" fill="#9cdcfe"/><rect x="31" y="57.5" width="1" height="1.2" fill="#a0a0a0"/><rect x="32" y="57.5" width="1" height="1.2" fill="#a0a0a0"/><rect x="33" y="57.5" width="1" height="1.2" fill="#a0a0a0"/><rect x="8" y="61.5" width="61" height="1.2" fill="#6a9955"/><rect x="8" y="63.5" width="2" height="1.2" fill="#c586c0"/><rect x="11" y="63.5" width="1" height="1.2" fill="#a0a0a0"/><rect x="12" y="63.5" width="1" height="1.2" fill="#a0a0a0"/><rect x="13" y="63.5" width="7" height="1.2" fill="#9cdcfe"/><rect x="21" y="63.5" width="1" height="1.2" fill="#a0a0a0"/><rect x="22" y="63.5" width="1" height="1.2" fill="#a0a0a0"/><rect x="24" y="63.5" width="10" height="1.2" fill="#9cdcfe"/><rect x="34" y="63.5" width="1" height="1.2" fill="#a0a0a0"/><rect x="36" y="63.5" width="1" height="1.2" fill="#a0a0a0"/><rect x="10" y="65.5" width="6" height="1.2" fill="#c586c0"/><rect x="17" y="65.5" width="4" height="1.2" fill="#569cd6"/><rect x="21" y="65.5" width="1" height="1.2" fill="#a0a0a0"/><rect x="23" y="65.5" width="23" height="1.2" fill="#6a9955"/><rect x="8" y="67.5" width="1" height="1.2" fill="#a0a0a0"/><rect x="8" y="71.5" width="6" height="1.2" fill="#c586c0"/><rect x="15" y="71.5" width="8" height="1.2" fill="#9cdcfe"/><rect x="23" y="71.5" width="1" height="1.2" fill="#a0a0a0"/><rect x="6" y="73.5" width="1" height="1.2" fill="#a0a0a0"/><rect x="7" y="73.5" width="1" height="1.2" fill="#a0a0a0"/><rect x="6" y="77.5" width="5" height="1.2" fill="#569cd6"/><rect x="12" y="77.5" width="7" height="1.2" fill="#9cdcfe"/><rect x="20" y="77.5" width="1" height="1.2" fill="#a0a0a0"/><rect x="22" y="77.5" width="5" height="1.2" fill="#c586c0"/><rect x="28" y="77.5" width="1" height="1.2" fill="#a0a0a0"/><rect x="29" y="77.5" width="1" height="1.2" fill="#a0a0a0"/><rect x="30" y="77.5" width="1" height="1.2" fill="#a0a0a0"/><rect x="32" y="77.5" width="7" height="1.2" fill="#4ec9b0"/><rect x="39" y="77.5" width="1" height="1.2" fill="#a0a0a0"/><rect x="40" y="77.5" width="4" height="1.2" fill="#4ec9b0"/><rect x="44" y="77.5" width="1" height="1.2" fill="#a0a0a0"/><rect x="46" y="77.5" width="1" height="1.2" fill="#a0a0a0"/><rect x="47" y="77.5" width="1" height="1.2" fill="#a0a0a0"/><rect x="49" y="77.5" width="1" height="1.2" fill="#a0a0a0"/><rect x="8" y="79.5" width="5" height="1.2" fill="#569cd6"/><rect x="14" y="79.5" width="8" height="1.2" fill="#9cdcfe"/><rect x="23" y="79.5" width="1" height="1.2" fill="#a0a0a0"/><rect x="25" y="79.5" width="5" height="1.2" fill="#c586c0"/><rect x="31" y="79.5" width="3" height="1.2" fill="#9cdcfe"/><rect x="34" y="79.5" width="1" height="1.2" fill="#a0a0a0"/><rect x="35" y="79.5" width="3" height="1.2" fill="#dcdcaa"/><rect x="38" y="79.5" width="1" height="1.2" fill="#a0a0a0"/><rect x="39" y="79.5" width="10" height="1.2" fill="#ce9178"/><rect x="49" y="79.5" width="1" height="1.2" fill="#a0a0a0"/><rect x="50" y="79.5" width="1" height="1.2" fill="#a0a0a0"/><rect x="8" y="81.5" width="6" height="1.2" fill="#c586c0"/><rect x="15" y="81.5" width="8" height="1.2" fill="#9cdcfe"/><rect x="23" y="81.5" width="1" height="1.2" fill="#a0a0a0"/><rect x="24" y="81.5" width="4" height="1.2" fill="#9cdcfe"/><rect x="28" y="81.5" width="1" height="1.2" fill="#a0a0a0"/><rect x="8" y="83.5" width="5" height="1.2" fill="#9cdcfe"/><rect x="14" y="83.5" width="8" height="1.2" fill="#9cdcfe"/><rect x="22" y="83.5" width="1" height="1.2" fill="#a0a0a0"/><rect x="6" y="85.5" width="1" height="1.2" fill="#a0a0a0"/><rect x="7" y="85.5" width="1" height="1.2" fill="#a0a0a0"/><rect x="6" y="89.5" width="5" height="1.2" fill="#569cd6"/><rect x="12" y="89.5" width="6" height="1.2" fill="#9cdcfe"/><rect x="19" y="89.5" width="1" height="1.2" fill="#a0a0a0"/><rect x="21" y="89.5" width="1" height="1.2" fill="#a0a0a0"/><rect x="22" y="89.5" width="1" height="1.2" fill="#a0a0a0"/><rect x="23" y="89.5" width="1" height="1.2" fill="#a0a0a0"/><rect x="25" y="89.5" width="7" height="1.2" fill="#4ec9b0"/><rect x="32" y="89.5" width="1" height="1.2" fill="#a0a0a0"/><rect x="33" y="89.5" width="4" height="1.2" fill="#569cd6"/><rect x="37" y="89.5" width="1" height="1.2" fill="#a0a0a0"/><rect x="39" y="89.5" width="1" height="1.2" fill="#a0a0a0"/><rect x="40" y="89.5" width="1" height="1.2" fill="#a0a0a0"/><rect x="42" y="89.5" width="1" height="1.2" fill="#a0a0a0"/><rect x="8" y="91.5" width="27" height="1.2" fill="#6a9955"/><rect x="8" y="93.5" width="12" height="1.2" fill="#9cdcfe"/><rect x="20" y="93.5" width="1" height="1.2" fill="#a0a0a0"/><rect x="21" y="93.5" width="10" height="1.2" fill="#dcdcaa"/><rect x="31" y="93.5" width="1" height="1.2" fill="#a0a0a0"/><rect x="32" y="93.5" width="13" height="1.2" fill="#ce9178"/><rect x="45" y="93.5" width="1" height="1.2" fill="#a0a0a0"/><rect x="46" y="93.5" width="1" height="1.2" fill="#a0a0a0"/><rect x="8" y="95.5" width="12" height="1.2" fill="#9cdcfe"/><rect x="20" y="95.5" width="1" height="1.2" fill="#a0a0a0"/><rect x="21" y="95.5" width="10" height="1.2" fill="#dcdcaa"/><rect x="31" y="95.5" width="1" height="1.2" fill="#a0a0a0"/><rect x="32" y="95.5" width="14" height="1.2" fill="#ce9178"/><rect x="46" y="95.5" width="1" height="1.2" fill="#a0a0a0"/><rect x="47" y="95.5" width="1" height="1.2" fill="#a0a0a0"/><rect x="8" y="97.5" width="12" height="1.2" fill="#9cdcfe"/><rect x="20" y="97.5" width="1" height="1.2" fill="#a0a0a0"/><rect x="21" y="97.5" width="10" height="1.2" fill="#dcdcaa"/><rect x="31" y="97.5" width="1" height="1.2" fill="#a0a0a0"/><rect x="32" y="97.5" width="6" height="1.2" fill="#ce9178"/><rect x="38" y="97.5" width="1" height="1.2" fill="#a0a0a0"/><rect x="39" y="97.5" width="1" height="1.2" fill="#a0a0a0"/><rect x="6" y="99.5" width="1" height="1.2" fill="#a0a0a0"/><rect x="7" y="99.5" width="1" height="1.2" fill="#a0a0a0"/><rect x="6" y="103.5" width="6" height="1.2" fill="#c586c0"/><rect x="13" y="103.5" width="5" height="1.2" fill="#569cd6"/><rect x="19" y="103.5" width="16" height="1.2" fill="#9cdcfe"/><rect x="36" y="103.5" width="1" height="1.2" fill="#a0a0a0"/><rect x="38" y="103.5" width="1" height="1.2" fill="#9cdcfe"/><rect x="39" y="103.5" width="1" height="1.2" fill="#a0a0a0"/><rect x="40" y="103.5" width="6" height="1.2" fill="#dcdcaa"/><rect x="46" y="103.5" width="1" height="1.2" fill="#a0a0a0"/><rect x="47" y="103.5" width="1" height="1.2" fill="#a0a0a0"/><rect x="8" y="105.5" width="5" height="1.2" fill="#9cdcfe"/><rect x="13" y="105.5" width="1" height="1.2" fill="#a0a0a0"/><rect x="15" y="105.5" width="1" height="1.2" fill="#9cdcfe"/><rect x="16" y="105.5" width="1" height="1.2" fill="#a0a0a0"/><rect x="17" y="105.5" width="6" height="1.2" fill="#dcdcaa"/><rect x="23" y="105.5" width="1" height="1.2" fill="#a0a0a0"/><rect x="24" y="105.5" width="1" height="1.2" fill="#a0a0a0"/><rect x="25" y="105.5" width="1" height="1.2" fill="#a0a0a0"/><rect x="26" y="105.5" width="3" height="1.2" fill="#dcdcaa"/><rect x="29" y="105.5" width="1" height="1.2" fill="#a0a0a0"/><rect x="30" y="105.5" width="1" height="1.2" fill="#a0a0a0"/><rect x="31" y="105.5" width="1" height="1.2" fill="#a0a0a0"/><rect x="33" y="105.5" width="10" height="1.2" fill="#ce9178"/><rect x="43" y="105.5" width="1" height="1.2" fill="#a0a0a0"/><rect x="44" y="105.5" width="1" height="1.2" fill="#a0a0a0"/><rect x="45" y="105.5" width="5" height="1.2" fill="#dcdcaa"/><rect x="50" y="105.5" width="1" height="1.2" fill="#a0a0a0"/><rect x="51" y="105.5" width="15" height="1.2" fill="#ce9178"/><rect x="66" y="105.5" width="1" height="1.2" fill="#a0a0a0"/><rect x="67" y="105.5" width="1" height="1.2" fill="#a0a0a0"/><rect x="8" y="107.5" width="8" height="1.2" fill="#9cdcfe"/><rect x="16" y="107.5" width="1" height="1.2" fill="#a0a0a0"/><rect x="18" y="107.5" width="1" height="1.2" fill="#9cdcfe"/><rect x="19" y="107.5" width="1" height="1.2" fill="#a0a0a0"/><rect x="20" y="107.5" width="6" height="1.2" fill="#dcdcaa"/><rect x="26" y="107.5" width="1" height="1.2" fill="#a0a0a0"/><rect x="27" y="107.5" width="1" height="1.2" fill="#a0a0a0"/><rect x="28" y="107.5" width="1" height="1.2" fill="#a0a0a0"/><rect x="29" y="107.5" width="3" height="1.2" fill="#dcdcaa"/><rect x="32" y="107.5" width="1" height="1.2" fill="#a0a0a0"/><rect x="33" y="107.5" width="1" height="1.2" fill="#a0a0a0"/><rect x="34" y="107.5" width="1" height="1.2" fill="#a0a0a0"/><rect x="36" y="107.5" width="10" height="1.2" fill="#ce9178"/><rect x="46" y="107.5" width="1" height="1.2" fill="#a0a0a0"/><rect x="47" y="107.5" width="1" height="1.2" fill="#a0a0a0"/><rect x="6" y="109.5" width="1" height="1.2" fill="#a0a0a0"/><rect x="7" y="109.5" width="1" height="1.2" fill="#a0a0a0"/><rect x="8" y="109.5" width="1" height="1.2" fill="#a0a0a0"/><rect x="6" y="113.5" width="6" height="1.2" fill="#c586c0"/><rect x="13" y="113.5" width="4" height="1.2" fill="#569cd6"/><rect x="18" y="113.5" width="10" height="1.2" fill="#4ec9b0"/><rect x="29" y="113.5" width="1" height="1.2" fill="#a0a0a0"/><rect x="31" y="113.5" width="1" height="1.2" fill="#9cdcfe"/><rect x="32" y="113.5" width="1" height="1.2" fill="#a0a0a0"/><rect x="33" y="113.5" width="5" height="1.2" fill="#9cdcfe"/><rect x="38" y="113.5" width="1" height="1.2" fill="#a0a0a0"/><rect x="39" y="113.5" width="6" height="1.2" fill="#569cd6"/><rect x="46" y="113.5" width="16" height="1.2" fill="#9cdcfe"/><rect x="62" y="113.5" width="1" height="1.2" fill="#a0a0a0"/><rect x="63" y="113.5" width="1" height="1.2" fill="#a0a0a0"/><rect x="6" y="115.5" width="5" height="1.2" fill="#569cd6"/><rect x="12" y="115.5" width="25" height="1.2" fill="#9cdcfe"/><rect x="38" y="115.5" width="1" height="1.2" fill="#a0a0a0"/><rect x="40" y="115.5" width="1" height="1.2" fill="#a0a0a0"/><rect x="41" y="115.5" width="4" height="1.2" fill="#9cdcfe"/><rect x="45" y="115.5" width="1" height="1.2" fill="#a0a0a0"/><rect x="47" y="115.5" width="10" height="1.2" fill="#4ec9b0"/><rect x="57" y="115.5" width="1" height="1.2" fill="#a0a0a0"/><rect x="58" y="115.5" width="1" height="1.2" fill="#a0a0a0"/><rect x="60" y="115.5" width="7" height="1.2" fill="#4ec9b0"/><rect x="67" y="115.5" width="1" height="1.2" fill="#a0a0a0"/><rect x="68" y="115.5" width="12" height="1.2" fill="#4ec9b0"/><rect x="80" y="115.5" width="1" height="1.2" fill="#a0a0a0"/><rect x="82" y="115.5" width="1" height="1.2" fill="#a0a0a0"/><rect x="83" y="115.5" width="1" height="1.2" fill="#a0a0a0"/><rect x="85" y="115.5" width="1" height="1.2" fill="#a0a0a0"/><rect x="8" y="117.5" width="6" height="1.2" fill="#c586c0"/><rect x="15" y="117.5" width="3" height="1.2" fill="#9cdcfe"/><rect x="18" y="117.5" width="1" height="1.2" fill="#a0a0a0"/><rect x="19" y="117.5" width="4" height="1.2" fill="#dcdcaa"/><rect x="23" y="117.5" width="1" height="1.2" fill="#a0a0a0"/><rect x="24" y="117.5" width="13" height="1.2" fill="#ce9178"/><rect x="37" y="117.5" width="1" height="1.2" fill="#a0a0a0"/><rect x="39" y="117.5" width="4" height="1.2" fill="#9cdcfe"/><rect x="43" y="117.5" width="1" height="1.2" fill="#a0a0a0"/><rect x="44" y="117.5" width="1" height="1.2" fill="#a0a0a0"/><rect x="6" y="119.5" width="1" height="1.2" fill="#a0a0a0"/><rect x="7" y="119.5" width="1" height="1.2" fill="#a0a0a0"/><rect x="6" y="123.5" width="6" height="1.2" fill="#c586c0"/><rect x="13" y="123.5" width="5" height="1.2" fill="#569cd6"/><rect x="19" y="123.5" width="19" height="1.2" fill="#9cdcfe"/><rect x="39" y="123.5" width="1" height="1.2" fill="#a0a0a0"/><rect x="41" y="123.5" width="1" height="1.2" fill="#9cdcfe"/><rect x="8" y="125.5" width="1" height="1.2" fill="#a0a0a0"/><rect x="9" y="125.5" width="6" height="1.2" fill="#dcdcaa"/><rect x="15" y="125.5" width="1" height="1.2" fill="#a0a0a0"/><rect x="16" y="125.5" width="1" height="1.2" fill="#a0a0a0"/><rect x="10" y="127.5" width="5" height="1.2" fill="#9cdcfe"/><rect x="15" y="127.5" width="1" height="1.2" fill="#a0a0a0"/><rect x="17" y="127.5" width="1" height="1.2" fill="#9cdcfe"/><rect x="18" y="127.5" width="1" height="1.2" fill="#a0a0a0"/><rect x="19" y="127.5" width="6" height="1.2" fill="#dcdcaa"/><rect x="25" y="127.5" width="1" height="1.2" fill="#a0a0a0"/><rect x="26" y="127.5" width="1" height="1.2" fill="#a0a0a0"/><rect x="27" y="127.5" width="1" height="1.2" fill="#a0a0a0"/><rect x="28" y="127.5" width="3" height="1.2" fill="#dcdcaa"/><rect x="31" y="127.5" width="1" height="1.2" fill="#a0a0a0"/><rect x="32" y="127.5" width="1" height="1.2" fill="#a0a0a0"/><rect x="33" y="127.5" width="1" height="1.2" fill="#a0a0a0"/><rect x="35" y="127.5" width="10" height="1.2" fill="#ce9178"/><rect x="45" y="127.5" width="1" height="1.2" fill="#a0a0a0"/><rect x="46" y="127.5" width="1" height="1.2" fill="#a0a0a0"/><rect x="10" y="129.5" width="9" height="1.2" fill="#9cdcfe"/><rect x="19" y="129.5" width="1" height="1.2" fill="#a0a0a0"/><rect x="21" y="129.5" width="1" height="1.2" fill="#9cdcfe"/><rect x="22" y="129.5" width="1" height="1.2" fill="#a0a0a0"/><rect x="23" y="129.5" width="6" height="1.2" fill="#dcdcaa"/><rect x="29" y="129.5" width="1" height="1.2" fill="#a0a0a0"/><rect x="30" y="129.5" width="1" height="1.2" fill="#a0a0a0"/><rect x="31" y="129.5" width="1" height="1.2" fill="#a0a0a0"/><rect x="32" y="129.5" width="3" height="1.2" fill="#dcdcaa"/><rect x="35" y="129.5" width="1" height="1.2" fill="#a0a0a0"/><rect x="36" y="129.5" width="1" height="1.2" fill="#a0a0a0"/><rect x="37" y="129.5" width="1" height="1.2" fill="#a0a0a0"/><rect x="39" y="129.5" width="10" height="1.2" fill="#ce9178"/><rect x="49" y="129.5" width="1" height="1.2" fill="#a0a0a0"/><rect x="50" y="129.5" width="1" height="1.2" fill="#a0a0a0"/><rect x="10" y="131.5" width="8" height="1.2" fill="#9cdcfe"/><rect x="18" y="131.5" width="1" height="1.2" fill="#a0a0a0"/><rect x="20" y="131.5" width="1" height="1.2" fill="#9cdcfe"/><rect x="21" y="131.5" width="1" height="1.2" fill="#a0a0a0"/><rect x="22" y="131.5" width="6" height="1.2" fill="#dcdcaa"/><rect x="28" y="131.5" width="1" height="1.2" fill="#a0a0a0"/><rect x="29" y="131.5" width="1" height="1.2" fill="#a0a0a0"/><rect x="30" y="131.5" width="1" height="1.2" fill="#a0a0a0"/><rect x="31" y="131.5" width="3" height="1.2" fill="#dcdcaa"/><rect x="34" y="131.5" width="1" height="1.2" fill="#a0a0a0"/><rect x="35" y="131.5" width="1" height="1.2" fill="#a0a0a0"/><rect x="36" y="131.5" width="1" height="1.2" fill="#a0a0a0"/><rect x="38" y="131.5" width="10" height="1.2" fill="#ce9178"/><rect x="48" y="131.5" width="1" height="1.2" fill="#a0a0a0"/><rect x="49" y="131.5" width="1" height="1.2" fill="#a0a0a0"/><rect x="10" y="133.5" width="8" height="1.2" fill="#9cdcfe"/><rect x="18" y="133.5" width="1" height="1.2" fill="#a0a0a0"/><rect x="20" y="133.5" width="1" height="1.2" fill="#9cdcfe"/><rect x="21" y="133.5" width="1" height="1.2" fill="#a0a0a0"/><rect x="22" y="133.5" width="6" height="1.2" fill="#dcdcaa"/><rect x="28" y="133.5" width="1" height="1.2" fill="#a0a0a0"/><rect x="29" y="133.5" width="1" height="1.2" fill="#a0a0a0"/><rect x="30" y="133.5" width="1" height="1.2" fill="#a0a0a0"/><rect x="31" y="133.5" width="3" height="1.2" fill="#dcdcaa"/><rect x="34" y="133.5" width="1" height="1.2" fill="#a0a0a0"/><rect x="35" y="133.5" width="1" height="1.2" fill="#a0a0a0"/><rect x="36" y="133.5" width="1" height="1.2" fill="#a0a0a0"/><rect x="38" y="133.5" width="10" height="1.2" fill="#ce9178"/><rect x="48" y="133.5" width="1" height="1.2" fill="#a0a0a0"/><rect x="49" y="133.5" width="1" height="1.2" fill="#a0a0a0"/><rect x="8" y="135.5" width="1" height="1.2" fill="#a0a0a0"/><rect x="9" y="135.5" width="1" height="1.2" fill="#a0a0a0"/><rect x="8" y="137.5" width="1" height="1.2" fill="#a0a0a0"/><rect x="9" y="137.5" width="3" height="1.2" fill="#c586c0"/><rect x="12" y="137.5" width="1" height="1.2" fill="#a0a0a0"/><rect x="10" y="139.5" width="1" height="1.2" fill="#9cdcfe"/><rect x="12" y="141.5" width="1" height="1.2" fill="#a0a0a0"/><rect x="13" y="141.5" width="6" height="1.2" fill="#dcdcaa"/><rect x="19" y="141.5" width="1" height="1.2" fill="#a0a0a0"/><rect x="20" y="141.5" width="1" height="1.2" fill="#a0a0a0"/><rect x="14" y="143.5" width="6" height="1.2" fill="#9cdcfe"/><rect x="20" y="143.5" width="1" height="1.2" fill="#a0a0a0"/><rect x="22" y="143.5" width="1" height="1.2" fill="#9cdcfe"/><rect x="23" y="143.5" width="1" height="1.2" fill="#a0a0a0"/><rect x="24" y="143.5" width="6" height="1.2" fill="#dcdcaa"/><rect x="30" y="143.5" width="1" height="1.2" fill="#a0a0a0"/><rect x="31" y="143.5" width="1" height="1.2" fill="#a0a0a0"/><rect x="32" y="143.5" width="1" height="1.2" fill="#a0a0a0"/><rect x="33" y="143.5" width="3" height="1.2" fill="#dcdcaa"/><rect x="36" y="143.5" width="1" height="1.2" fill="#a0a0a0"/><rect x="37" y="143.5" width="1" height="1.2" fill="#a0a0a0"/><rect x="38" y="143.5" width="1" height="1.2" fill="#a0a0a0"/><rect x="40" y="143.5" width="10" height="1.2" fill="#ce9178"/><rect x="50" y="143.5" width="1" height="1.2" fill="#a0a0a0"/><rect x="51" y="143.5" width="1" height="1.2" fill="#a0a0a0"/><rect x="14" y="145.5" width="8" height="1.2" fill="#9cdcfe"/><rect x="22" y="145.5" width="1" height="1.2" fill="#a0a0a0"/><rect x="24" y="145.5" width="1" height="1.2" fill="#9cdcfe"/><rect x="25" y="145.5" width="1" height="1.2" fill="#a0a0a0"/><rect x="26" y="145.5" width="4" height="1.2" fill="#569cd6"/><rect x="30" y="145.5" width="1" height="1.2" fill="#a0a0a0"/><rect x="31" y="145.5" width="1" height="1.2" fill="#a0a0a0"/><rect x="32" y="145.5" width="1" height="1.2" fill="#a0a0a0"/><rect x="33" y="145.5" width="7" height="1.2" fill="#dcdcaa"/><rect x="40" y="145.5" width="1" height="1.2" fill="#a0a0a0"/><rect x="41" y="145.5" width="4" height="1.2" fill="#569cd6"/><rect x="45" y="145.5" width="1" height="1.2" fill="#a0a0a0"/><rect x="46" y="145.5" width="1" height="1.2" fill="#a0a0a0"/><rect x="12" y="147.5" width="1" height="1.2" fill="#a0a0a0"/><rect x="13" y="147.5" width="1" height="1.2" fill="#a0a0a0"/><rect x="12" y="149.5" width="1" height="1.2" fill="#a0a0a0"/><rect x="13" y="149.5" width="2" height="1.2" fill="#c586c0"/><rect x="15" y="149.5" width="1" height="1.2" fill="#a0a0a0"/><rect x="14" y="151.5" width="1" height="1.2" fill="#9cdcfe"/><rect x="15" y="151.5" width="1" height="1.2" fill="#a0a0a0"/><rect x="16" y="151.5" width="6" height="1.2" fill="#dcdcaa"/><rect x="22" y="151.5" width="1" height="1.2" fill="#a0a0a0"/><rect x="23" y="151.5" width="1" height="1.2" fill="#a0a0a0"/><rect x="16" y="153.5" width="8" height="1.2" fill="#9cdcfe"/><rect x="24" y="153.5" width="1" height="1.2" fill="#a0a0a0"/><rect x="26" y="153.5" width="1" height="1.2" fill="#9cdcfe"/><rect x="27" y="153.5" width="1" height="1.2" fill="#a0a0a0"/><rect x="28" y="153.5" width="6" height="1.2" fill="#dcdcaa"/><rect x="34" y="153.5" width="1" height="1.2" fill="#a0a0a0"/><rect x="35" y="153.5" width="1" height="1.2" fill="#a0a0a0"/><rect x="36" y="153.5" width="1" height="1.2" fill="#a0a0a0"/><rect x="37" y="153.5" width="3" height="1.2" fill="#dcdcaa"/><rect x="40" y="153.5" width="1" height="1.2" fill="#a0a0a0"/><rect x="41" y="153.5" width="1" height="1.2" fill="#a0a0a0"/><rect x="42" y="153.5" width="1" height="1.2" fill="#a0a0a0"/><rect x="44" y="153.5" width="10" height="1.2" fill="#ce9178"/><rect x="54" y="153.5" width="1" height="1.2" fill="#a0a0a0"/><rect x="55" y="153.5" width="1" height="1.2" fill="#a0a0a0"/><rect x="16" y="155.5" width="6" height="1.2" fill="#9cdcfe"/><rect x="22" y="155.5" width="1" height="1.2" fill="#a0a0a0"/><rect x="24" y="155.5" width="1" height="1.2" fill="#9cdcfe"/><rect x="25" y="155.5" width="1" height="1.2" fill="#a0a0a0"/><rect x="26" y="155.5" width="4" height="1.2" fill="#569cd6"/><rect x="30" y="155.5" width="1" height="1.2" fill="#a0a0a0"/><rect x="31" y="155.5" width="1" height="1.2" fill="#a0a0a0"/><rect x="32" y="155.5" width="1" height="1.2" fill="#a0a0a0"/><rect x="33" y="155.5" width="7" height="1.2" fill="#dcdcaa"/><rect x="40" y="155.5" width="1" height="1.2" fill="#a0a0a0"/><rect x="41" y="155.5" width="4" height="1.2" fill="#569cd6"/><rect x="45" y="155.5" width="1" height="1.2" fill="#a0a0a0"/><rect x="46" y="155.5" width="1" height="1.2" fill="#a0a0a0"/><rect x="14" y="157.5" width="1" height="1.2" fill="#a0a0a0"/><rect x="15" y="157.5" width="1" height="1.2" fill="#a0a0a0"/><rect x="16" y="157.5" width="1" height="1.2" fill="#a0a0a0"/><rect x="12" y="159.5" width="1" height="1.2" fill="#a0a0a0"/><rect x="13" y="159.5" width="1" height="1.2" fill="#a0a0a0"/><rect x="8" y="161.5" width="1" height="1.2" fill="#a0a0a0"/><rect x="9" y="161.5" width="1" height="1.2" fill="#a0a0a0"/><rect x="6" y="165.5" width="6" height="1.2" fill="#c586c0"/><rect x="13" y="165.5" width="4" height="1.2" fill="#569cd6"/><rect x="18" y="165.5" width="13" height="1.2" fill="#4ec9b0"/><rect x="32" y="165.5" width="1" height="1.2" fill="#a0a0a0"/><rect x="34" y="165.5" width="1" height="1.2" fill="#9cdcfe"/><rect x="35" y="165.5" width="1" height="1.2" fill="#a0a0a0"/><rect x="36" y="165.5" width="5" height="1.2" fill="#9cdcfe"/><rect x="41" y="165.5" width="1" height="1.2" fill="#a0a0a0"/><rect x="42" y="165.5" width="6" height="1.2" fill="#569cd6"/><rect x="49" y="165.5" width="19" height="1.2" fill="#9cdcfe"/><rect x="68" y="165.5" width="1" height="1.2" fill="#a0a0a0"/><rect x="69" y="165.5" width="1" height="1.2" fill="#a0a0a0"/><rect x="6" y="169.5" width="5" height="1.2" fill="#569cd6"/><rect x="12" y="169.5" width="28" height="1.2" fill="#9cdcfe"/><rect x="41" y="169.5" width="1" height="1.2" fill="#a0a0a0"/><rect x="43" y="169.5" width="1" height="1.2" fill="#a0a0a0"/><rect x="8" y="171.5" width="4" height="1.2" fill="#9cdcfe"/><rect x="12" y="171.5" width="1" height="1.2" fill="#a0a0a0"/><rect x="14" y="171.5" width="13" height="1.2" fill="#4ec9b0"/><rect x="27" y="171.5" width="1" height="1.2" fill="#a0a0a0"/><rect x="6" y="173.5" width="1" height="1.2" fill="#a0a0a0"/><rect x="7" y="173.5" width="1" height="1.2" fill="#a0a0a0"/><rect x="9" y="173.5" width="7" height="1.2" fill="#4ec9b0"/><rect x="16" y="173.5" width="1" height="1.2" fill="#a0a0a0"/><rect x="17" y="173.5" width="12" height="1.2" fill="#4ec9b0"/><rect x="29" y="173.5" width="1" height="1.2" fill="#a0a0a0"/><rect x="31" y="173.5" width="1" height="1.2" fill="#a0a0a0"/><rect x="32" y="173.5" width="1" height="1.2" fill="#a0a0a0"/><rect x="34" y="173.5" width="1" height="1.2" fill="#a0a0a0"/><rect x="8" y="175.5" width="6" height="1.2" fill="#c586c0"/><rect x="15" y="175.5" width="3" height="1.2" fill="#9cdcfe"/><rect x="18" y="175.5" width="1" height="1.2" fill="#a0a0a0"/><rect x="19" y="175.5" width="4" height="1.2" fill="#dcdcaa"/><rect x="23" y="175.5" width="1" height="1.2" fill="#a0a0a0"/><rect x="24" y="175.5" width="16" height="1.2" fill="#ce9178"/><rect x="40" y="175.5" width="1" height="1.2" fill="#a0a0a0"/><rect x="42" y="175.5" width="4" height="1.2" fill="#9cdcfe"/><rect x="46" y="175.5" width="1" height="1.2" fill="#a0a0a0"/><rect x="47" y="175.5" width="1" height="1.2" fill="#a0a0a0"/><rect x="6" y="177.5" width="1" height="1.2" fill="#a0a0a0"/><rect x="7" y="177.5" width="1" height="1.2" fill="#a0a0a0"/><rect x="6" y="181.5" width="5" height="1.2" fill="#569cd6"/><rect x="12" y="181.5" width="10" height="1.2" fill="#9cdcfe"/><rect x="23" y="181.5" width="1" height="1.2" fill="#a0a0a0"/><rect x="25" y="181.5" width="1" height="1.2" fill="#a0a0a0"/><rect x="8" y="183.5" width="6" height="1.2" fill="#9cdcfe"/><rect x="14" y="183.5" width="1" height="1.2" fill="#a0a0a0"/><rect x="16" y="183.5" width="7" height="1.2" fill="#9cdcfe"/><rect x="23" y="183.5" width="1" height="1.2" fill="#a0a0a0"/><rect x="8" y="187.5" width="7" height="1.2" fill="#9cdcfe"/><rect x="15" y="187.5" width="1" height="1.2" fill="#a0a0a0"/><rect x="17" y="187.5" width="5" height="1.2" fill="#c586c0"/><rect x="23" y="187.5" width="1" height="1.2" fill="#a0a0a0"/><rect x="24" y="187.5" width="4" height="1.2" fill="#9cdcfe"/><rect x="28" y="187.5" width="1" height="1.2" fill="#a0a0a0"/><rect x="30" y="187.5" width="10" height="1.2" fill="#4ec9b0"/><rect x="40" y="187.5" width="1" height="1.2" fill="#a0a0a0"/><rect x="42" y="187.5" width="1" height="1.2" fill="#a0a0a0"/><rect x="43" y="187.5" width="1" height="1.2" fill="#a0a0a0"/><rect x="45" y="187.5" width="1" height="1.2" fill="#a0a0a0"/><rect x="10" y="189.5" width="5" height="1.2" fill="#569cd6"/><rect x="16" y="189.5" width="8" height="1.2" fill="#9cdcfe"/><rect x="25" y="189.5" width="1" height="1.2" fill="#a0a0a0"/><rect x="27" y="189.5" width="5" height="1.2" fill="#c586c0"/><rect x="33" y="189.5" width="25" height="1.2" fill="#dcdcaa"/><rect x="58" y="189.5" width="1" height="1.2" fill="#a0a0a0"/><rect x="59" y="189.5" width="4" height="1.2" fill="#9cdcfe"/><rect x="63" y="189.5" width="1" height="1.2" fill="#a0a0a0"/><rect x="64" y="189.5" width="1" height="1.2" fill="#a0a0a0"/><rect x="10" y="191.5" width="12" height="1.2" fill="#9cdcfe"/><rect x="22" y="191.5" width="1" height="1.2" fill="#a0a0a0"/><rect x="23" y="191.5" width="7" height="1.2" fill="#dcdcaa"/><rect x="30" y="191.5" width="1" height="1.2" fill="#a0a0a0"/><rect x="31" y="191.5" width="13" height="1.2" fill="#ce9178"/><rect x="44" y="191.5" width="1" height="1.2" fill="#a0a0a0"/><rect x="46" y="191.5" width="8" height="1.2" fill="#9cdcfe"/><rect x="54" y="191.5" width="1" height="1.2" fill="#a0a0a0"/><rect x="55" y="191.5" width="3" height="1.2" fill="#9cdcfe"/><rect x="58" y="191.5" width="1" height="1.2" fill="#a0a0a0"/><rect x="59" y="191.5" width="6" height="1.2" fill="#9cdcfe"/><rect x="65" y="191.5" width="1" height="1.2" fill="#a0a0a0"/><rect x="66" y="191.5" width="5" height="1.2" fill="#9cdcfe"/><rect x="71" y="191.5" width="1" height="1.2" fill="#a0a0a0"/><rect x="72" y="191.5" width="1" height="1.2" fill="#a0a0a0"/><rect x="10" y="193.5" width="12" height="1.2" fill="#9cdcfe"/><rect x="22" y="193.5" width="1" height="1.2" fill="#a0a0a0"/><rect x="23" y="193.5" width="7" height="1.2" fill="#dcdcaa"/><rect x="30" y="193.5" width="1" height="1.2" fill="#a0a0a0"/><rect x="31" y="193.5" width="14" height="1.2" fill="#ce9178"/><rect x="45" y="193.5" width="1" height="1.2" fill="#a0a0a0"/><rect x="47" y="193.5" width="8" height="1.2" fill="#9cdcfe"/><rect x="55" y="193.5" width="1" height="1.2" fill="#a0a0a0"/><rect x="56" y="193.5" width="3" height="1.2" fill="#9cdcfe"/><rect x="59" y="193.5" width="1" height="1.2" fill="#a0a0a0"/><rect x="60" y="193.5" width="7" height="1.2" fill="#9cdcfe"/><rect x="67" y="193.5" width="1" height="1.2" fill="#a0a0a0"/><rect x="68" y="193.5" width="5" height="1.2" fill="#9cdcfe"/><rect x="73" y="193.5" width="1" height="1.2" fill="#a0a0a0"/><rect x="74" y="193.5" width="1" height="1.2" fill="#a0a0a0"/><rect x="10" y="195.5" width="6" height="1.2" fill="#c586c0"/><rect x="17" y="195.5" width="8" height="1.2" fill="#9cdcfe"/><rect x="25" y="195.5" width="1" height="1.2" fill="#a0a0a0"/><rect x="26" y="195.5" width="4" height="1.2" fill="#9cdcfe"/><rect x="30" y="195.5" width="1" height="1.2" fill="#a0a0a0"/><rect x="8" y="197.5" width="1" height="1.2" fill="#a0a0a0"/><rect x="9" y="197.5" width="1" height="1.2" fill="#a0a0a0"/><rect x="8" y="201.5" width="10" height="1.2" fill="#9cdcfe"/><rect x="18" y="201.5" width="1" height="1.2" fill="#a0a0a0"/><rect x="20" y="201.5" width="5" height="1.2" fill="#c586c0"/><rect x="26" y="201.5" width="1" height="1.2" fill="#a0a0a0"/><rect x="27" y="201.5" width="4" height="1.2" fill="#9cdcfe"/><rect x="31" y="201.5" width="1" height="1.2" fill="#a0a0a0"/><rect x="33" y="201.5" width="13" height="1.2" fill="#4ec9b0"/><rect x="46" y="201.5" width="1" height="1.2" fill="#a0a0a0"/><rect x="48" y="201.5" width="1" height="1.2" fill="#a0a0a0"/><rect x="49" y="201.5" width="1" height="1.2" fill="#a0a0a0"/><rect x="51" y="201.5" width="1" height="1.2" fill="#a0a0a0"/><rect x="10" y="203.5" width="5" height="1.2" fill="#569cd6"/><rect x="16" y="203.5" width="8" height="1.2" fill="#9cdcfe"/><rect x="25" y="203.5" width="1" height="1.2" fill="#a0a0a0"/><rect x="27" y="203.5" width="5" height="1.2" fill="#c586c0"/><rect x="33" y="203.5" width="28" height="1.2" fill="#dcdcaa"/><rect x="61" y="203.5" width="1" height="1.2" fill="#a0a0a0"/><rect x="62" y="203.5" width="4" height="1.2" fill="#9cdcfe"/><rect x="66" y="203.5" width="1" height="1.2" fill="#a0a0a0"/><rect x="67" y="203.5" width="1" height="1.2" fill="#a0a0a0"/><rect x="10" y="205.5" width="12" height="1.2" fill="#9cdcfe"/><rect x="22" y="205.5" width="1" height="1.2" fill="#a0a0a0"/><rect x="23" y="205.5" width="7" height="1.2" fill="#dcdcaa"/><rect x="30" y="205.5" width="1" height="1.2" fill="#a0a0a0"/><rect x="31" y="205.5" width="13" height="1.2" fill="#ce9178"/><rect x="44" y="205.5" width="1" height="1.2" fill="#a0a0a0"/><rect x="46" y="205.5" width="8" height="1.2" fill="#9cdcfe"/><rect x="54" y="205.5" width="1" height="1.2" fill="#a0a0a0"/><rect x="55" y="205.5" width="3" height="1.2" fill="#9cdcfe"/><rect x="58" y="205.5" width="1" height="1.2" fill="#a0a0a0"/><rect x="59" y="205.5" width="6" height="1.2" fill="#9cdcfe"/><rect x="65" y="205.5" width="1" height="1.2" fill="#a0a0a0"/><rect x="66" y="205.5" width="5" height="1.2" fill="#9cdcfe"/><rect x="71" y="205.5" width="1" height="1.2" fill="#a0a0a0"/><rect x="72" y="205.5" width="1" height="1.2" fill="#a0a0a0"/><rect x="10" y="207.5" width="12" height="1.2" fill="#9cdcfe"/><rect x="22" y="207.5" width="1" height="1.2" fill="#a0a0a0"/><rect x="23" y="207.5" width="7" height="1.2" fill="#dcdcaa"/><rect x="30" y="207.5" width="1" height="1.2" fill="#a0a0a0"/><rect x="31" y="207.5" width="14" height="1.2" fill="#ce9178"/><rect x="45" y="207.5" width="1" height="1.2" fill="#a0a0a0"/><rect x="47" y="207.5" width="8" height="1.2" fill="#9cdcfe"/><rect x="55" y="207.5" width="1" height="1.2" fill="#a0a0a0"/><rect x="56" y="207.5" width="3" height="1.2" fill="#9cdcfe"/><rect x="59" y="207.5" width="1" height="1.2" fill="#a0a0a0"/><rect x="60" y="207.5" width="7" height="1.2" fill="#9cdcfe"/><rect x="67" y="207.5" width="1" height="1.2" fill="#a0a0a0"/><rect x="68" y="207.5" width="5" height="1.2" fill="#9cdcfe"/><rect x="73" y="207.5" width="1" height="1.2" fill="#a0a0a0"/><rect x="74" y="207.5" width="1" height="1.2" fill="#a0a0a0"/><rect x="10" y="209.5" width="6" height="1.2" fill="#c586c0"/><rect x="17" y="209.5" width="8" height="1.2" fill="#9cdcfe"/><rect x="25" y="209.5" width="1" height="1.2" fill="#a0a0a0"/><rect x="26" y="209.5" width="4" height="1.2" fill="#9cdcfe"/><rect x="30" y="209.5" width="1" height="1.2" fill="#a0a0a0"/><rect x="8" y="211.5" width="1" height="1.2" fill="#a0a0a0"/><rect x="9" y="211.5" width="1" height="1.2" fill="#a0a0a0"/><rect x="8" y="213.5" width="8" height="1.2" fill="#9cdcfe"/><rect x="16" y="213.5" width="1" height="1.2" fill="#a0a0a0"/><rect x="18" y="213.5" width="6" height="1.2" fill="#9cdcfe"/><rect x="24" y="213.5" width="1" height="1.2" fill="#a0a0a0"/><rect x="6" y="215.5" width="1" height="1.2" fill="#a0a0a0"/><rect x="7" y="215.5" width="1" height="1.2" fill="#a0a0a0"/><rect x="6" y="219.5" width="6" height="1.2" fill="#c586c0"/><rect x="13" y="219.5" width="5" height="1.2" fill="#569cd6"/><rect x="19" y="219.5" width="1" height="1.2" fill="#a0a0a0"/><rect x="21" y="219.5" width="7" height="1.2" fill="#9cdcfe"/><rect x="28" y="219.5" width="1" height="1.2" fill="#a0a0a0"/><rect x="30" y="219.5" width="8" height="1.2" fill="#9cdcfe"/><rect x="38" y="219.5" width="1" height="1.2" fill="#a0a0a0"/><rect x="40" y="219.5" width="9" height="1.2" fill="#9cdcfe"/><rect x="49" y="219.5" width="1" height="1.2" fill="#a0a0a0"/><rect x="51" y="219.5" width="11" height="1.2" fill="#9cdcfe"/><rect x="62" y="219.5" width="1" height="1.2" fill="#a0a0a0"/><rect x="64" y="219.5" width="10" height="1.2" fill="#4ec9b0"/><rect x="75" y="219.5" width="1" height="1.2" fill="#a0a0a0"/><rect x="77" y="219.5" width="1" height="1.2" fill="#a0a0a0"/><rect x="8" y="221.5" width="13" height="1.2" fill="#dcdcaa"/><rect x="21" y="221.5" width="1" height="1.2" fill="#a0a0a0"/><rect x="22" y="221.5" width="10" height="1.2" fill="#9cdcfe"/><rect x="32" y="221.5" width="1" height="1.2" fill="#a0a0a0"/><rect x="33" y="221.5" width="1" height="1.2" fill="#a0a0a0"/><rect x="6" y="225.5" width="6" height="1.2" fill="#c586c0"/><rect x="13" y="225.5" width="5" height="1.2" fill="#569cd6"/><rect x="19" y="225.5" width="14" height="1.2" fill="#4ec9b0"/><rect x="34" y="225.5" width="1" height="1.2" fill="#a0a0a0"/><rect x="36" y="225.5" width="1" height="1.2" fill="#a0a0a0"/><rect x="37" y="225.5" width="1" height="1.2" fill="#a0a0a0"/><rect x="39" y="225.5" width="8" height="1.2" fill="#9cdcfe"/><rect x="48" y="225.5" width="1" height="1.2" fill="#a0a0a0"/><rect x="49" y="225.5" width="1" height="1.2" fill="#a0a0a0"/><rect x="51" y="225.5" width="1" height="1.2" fill="#a0a0a0"/><rect x="53" y="225.5" width="8" height="1.2" fill="#9cdcfe"/><rect x="61" y="225.5" width="1" height="1.2" fill="#a0a0a0"/><rect x="63" y="225.5" width="5" height="1.2" fill="#4ec9b0"/><rect x="68" y="225.5" width="1" height="1.2" fill="#a0a0a0"/><rect x="69" y="225.5" width="9" height="1.2" fill="#4ec9b0"/><rect x="79" y="225.5" width="1" height="1.2" fill="#a0a0a0"/><rect x="80" y="225.5" width="1" height="1.2" fill="#a0a0a0"/><rect x="82" y="225.5" width="1" height="1.2" fill="#a0a0a0"/><rect x="83" y="225.5" width="1" height="1.2" fill="#a0a0a0"/><rect x="85" y="225.5" width="1" height="1.2" fill="#a0a0a0"/><rect x="8" y="227.5" width="5" height="1.2" fill="#569cd6"/><rect x="14" y="227.5" width="4" height="1.2" fill="#9cdcfe"/><rect x="19" y="227.5" width="1" height="1.2" fill="#a0a0a0"/><rect x="21" y="227.5" width="7" height="1.2" fill="#dcdcaa"/><rect x="28" y="227.5" width="1" height="1.2" fill="#a0a0a0"/><rect x="29" y="227.5" width="1" height="1.2" fill="#a0a0a0"/><rect x="30" y="227.5" width="1" height="1.2" fill="#a0a0a0"/><rect x="8" y="229.5" width="5" height="1.2" fill="#569cd6"/><rect x="14" y="229.5" width="8" height="1.2" fill="#9cdcfe"/><rect x="23" y="229.5" width="1" height="1.2" fill="#a0a0a0"/><rect x="25" y="229.5" width="11" height="1.2" fill="#dcdcaa"/><rect x="36" y="229.5" width="1" height="1.2" fill="#a0a0a0"/><rect x="37" y="229.5" width="1" height="1.2" fill="#a0a0a0"/><rect x="38" y="229.5" width="1" height="1.2" fill="#a0a0a0"/><rect x="8" y="233.5" width="2" height="1.2" fill="#c586c0"/><rect x="11" y="233.5" width="1" height="1.2" fill="#a0a0a0"/><rect x="12" y="233.5" width="1" height="1.2" fill="#a0a0a0"/><rect x="13" y="233.5" width="4" height="1.2" fill="#9cdcfe"/><rect x="17" y="233.5" width="1" height="1.2" fill="#a0a0a0"/><rect x="18" y="233.5" width="4" height="1.2" fill="#9cdcfe"/><rect x="22" y="233.5" width="1" height="1.2" fill="#a0a0a0"/><rect x="24" y="233.5" width="1" height="1.2" fill="#a0a0a0"/><rect x="10" y="235.5" width="6" height="1.2" fill="#c586c0"/><rect x="17" y="235.5" width="1" height="1.2" fill="#a0a0a0"/><rect x="12" y="237.5" width="1" height="1.2" fill="#a0a0a0"/><rect x="13" y="237.5" width="8" height="1.2" fill="#4ec9b0"/><rect x="22" y="237.5" width="2" height="1.2" fill="#9cdcfe"/><rect x="24" y="237.5" width="1" height="1.2" fill="#a0a0a0"/><rect x="25" y="237.5" width="1" height="1.2" fill="#a0a0a0"/><rect x="26" y="237.5" width="5" height="1.2" fill="#9cdcfe"/><rect x="31" y="237.5" width="1" height="1.2" fill="#a0a0a0"/><rect x="32" y="237.5" width="4" height="1.2" fill="#9cdcfe"/><rect x="36" y="237.5" width="1" height="1.2" fill="#a0a0a0"/><rect x="37" y="237.5" width="5" height="1.2" fill="#9cdcfe"/><rect x="42" y="237.5" width="1" height="1.2" fill="#a0a0a0"/><rect x="43" y="237.5" width="7" height="1.2" fill="#dcdcaa"/><rect x="50" y="237.5" width="1" height="1.2" fill="#a0a0a0"/><rect x="51" y="237.5" width="8" height="1.2" fill="#9cdcfe"/><rect x="59" y="237.5" width="1" height="1.2" fill="#a0a0a0"/><rect x="60" y="237.5" width="8" height="1.2" fill="#9cdcfe"/><rect x="68" y="237.5" width="1" height="1.2" fill="#a0a0a0"/><rect x="69" y="237.5" width="1" height="1.2" fill="#a0a0a0"/><rect x="71" y="237.5" width="7" height="1.2" fill="#9cdcfe"/><rect x="79" y="237.5" width="1" height="1.2" fill="#a0a0a0"/><rect x="80" y="237.5" width="1" height="1.2" fill="#a0a0a0"/><rect x="10" y="239.5" width="1" height="1.2" fill="#a0a0a0"/><rect x="11" y="239.5" width="1" height="1.2" fill="#a0a0a0"/><rect x="8" y="241.5" width="1" height="1.2" fill="#a0a0a0"/></svg>
<div class="r" style="left:1242px;top:220.2px;width:111px;height:2.2px;background:rgba(200,40,40,0.75);"></div>
<div class="r" style="left:1242px;top:220.2px;width:10px;height:2.2px;background:#e83838;"></div>
<div class="r" style="left:1354.5px;top:138px;width:1px;height:246px;background:#000000;"></div>
<div class="r" style="left:1355.5px;top:185px;width:10.5px;height:1.6px;background:#a0a0a0;"></div>
<div class="r" style="left:1362px;top:208px;width:4px;height:4px;background:#e83838;"></div>
<div class="r" style="left:300px;top:384px;width:1066px;height:366px;background:#181818;"></div>
<div class="r" style="left:300px;top:384px;width:1066px;height:1px;background:#2b2b2b;"></div>
<div class="t" style="left:316.5px;top:393.38px;font-size:9px;color:#9d9d9d;font-weight:400;font-family:'Liberation Sans', sans-serif;letter-spacing:-0.25px">PROBLEMS</div>
<div class="t" style="left:405px;top:393.38px;font-size:9px;color:#9d9d9d;font-weight:400;font-family:'Liberation Sans', sans-serif;letter-spacing:-0.25px">OUTPUT</div>
<div class="t" style="left:460.5px;top:393.38px;font-size:9px;color:#9d9d9d;font-weight:400;font-family:'Liberation Sans', sans-serif;letter-spacing:-0.25px">DEBUG CONSOLE</div>
<div class="t" style="left:554px;top:393.38px;font-size:9px;color:#e7e7e7;font-weight:400;font-family:'Liberation Sans', sans-serif;letter-spacing:-0.25px">TERMINAL</div>
<div class="t" style="left:618px;top:393.38px;font-size:9px;color:#9d9d9d;font-weight:400;font-family:'Liberation Sans', sans-serif;letter-spacing:-0.25px">PORTS</div>
<div class="t" style="left:666px;top:393.38px;font-size:9px;color:#9d9d9d;font-weight:400;font-family:'Liberation Sans', sans-serif;letter-spacing:-0.25px">COMMENTS</div>
<div class="r" style="left:371.8px;top:390.2px;width:15.2px;height:15.2px;border-radius:50%;background:#616161"></div>
<div class="t" style="left:376.6px;top:393.56px;font-size:9.5px;color:#ffffff;font-weight:400;font-family:'Liberation Sans', sans-serif;">1</div>
<div class="r" style="left:552.5px;top:406.5px;width:47px;height:1px;background:#0078d4;"></div>
<svg class="r" style="left:1265px;top:392px;" width="12" height="12" viewBox="0 0 12 12"><path d="M6 0.5 V11.5 M0.5 6 H11.5" stroke="#cccccc" stroke-width="1.2"/></svg>
<svg class="r" style="left:1281px;top:396px;" width="7" height="4" viewBox="0 0 7 4"><path d="M0.5 0.5 L3.5 3.5 L6.5 0.5" stroke="#cccccc" stroke-width="1" fill="none"/></svg>
<div class="r" style="left:1298.0px;top:397px;width:1.6px;height:1.6px;background:#cccccc;"></div>
<div class="r" style="left:1302.2px;top:397px;width:1.6px;height:1.6px;background:#cccccc;"></div>
<div class="r" style="left:1306.4px;top:397px;width:1.6px;height:1.6px;background:#cccccc;"></div>
<svg class="r" style="left:1320px;top:394px;" width="10" height="6" viewBox="0 0 10 6"><path d="M0.6 5.4 L5 1 L9.4 5.4" stroke="#cccccc" stroke-width="1.2" fill="none"/></svg>
<svg class="r" style="left:1342px;top:393px;" width="9" height="9" viewBox="0 0 9 9"><path d="M0.6 0.6 L8.4 8.4 M8.4 0.6 L0.6 8.4" stroke="#cccccc" stroke-width="1.2"/></svg>
<div class="t" style="left:316px;top:423.05px;font-size:11.67px;font-family:'Liberation Mono', monospace;transform:scaleY(1.08);transform-origin:0 9px"><span style="color:#e5e510;font-weight:400">[nodemon] watching extensions: js,mjs,json</span></div>
<div class="t" style="left:316px;top:438.05px;font-size:11.67px;font-family:'Liberation Mono', monospace;transform:scaleY(1.08);transform-origin:0 9px"><span style="color:#1db57a;font-weight:400">[nodemon] starting `node src/index.js`</span></div>
<div class="t" style="left:316px;top:453.05px;font-size:11.67px;font-family:'Liberation Mono', monospace;transform:scaleY(1.08);transform-origin:0 9px"><span style="color:#e5e510;font-weight:400">warn</span><span style="color:#cccccc;font-weight:400">: Unable to connect to email server. Make sure you have configured the SMTP options in .env</span></div>
<div class="t" style="left:316px;top:468.05px;font-size:11.67px;font-family:'Liberation Mono', monospace;transform:scaleY(1.08);transform-origin:0 9px"><span style="color:#cccccc;font-weight:400">^C</span></div>
<div class="t" style="left:316px;top:483.05px;font-size:11.67px;font-family:'Liberation Mono', monospace;transform:scaleY(1.08);transform-origin:0 9px"><span style="color:#23d18b;font-weight:700">esfera@esfera-To-be-filled-by-O-E-M</span><span style="color:#cccccc;font-weight:400">:</span><span style="color:#3b8eea;font-weight:700">/var/www/html/raghav/demo/backend</span><span style="color:#cccccc;font-weight:400">$ </span><span style="color:#cccccc;font-weight:400">^C</span></div>
<div class="t" style="left:316px;top:498.05px;font-size:11.67px;font-family:'Liberation Mono', monospace;transform:scaleY(1.08);transform-origin:0 9px"><span style="color:#23d18b;font-weight:700">esfera@esfera-To-be-filled-by-O-E-M</span><span style="color:#cccccc;font-weight:400">:</span><span style="color:#3b8eea;font-weight:700">/var/www/html/raghav/demo/backend</span><span style="color:#cccccc;font-weight:400">$ </span><span style="color:#cccccc;font-weight:400">sudo sytemctl start mongod</span></div>
<div class="t" style="left:316px;top:513.05px;font-size:11.67px;font-family:'Liberation Mono', monospace;transform:scaleY(1.08);transform-origin:0 9px"><span style="color:#cccccc;font-weight:400">sudo: sytemctl: command not found</span></div>
<div class="t" style="left:316px;top:528.05px;font-size:11.67px;font-family:'Liberation Mono', monospace;transform:scaleY(1.08);transform-origin:0 9px"><span style="color:#23d18b;font-weight:700">esfera@esfera-To-be-filled-by-O-E-M</span><span style="color:#cccccc;font-weight:400">:</span><span style="color:#3b8eea;font-weight:700">/var/www/html/raghav/demo/backend</span><span style="color:#cccccc;font-weight:400">$ </span><span style="color:#cccccc;font-weight:400">sudo systemctl start mongod</span></div>
<div class="t" style="left:316px;top:543.05px;font-size:11.67px;font-family:'Liberation Mono', monospace;transform:scaleY(1.08);transform-origin:0 9px"><span style="color:#23d18b;font-weight:700">esfera@esfera-To-be-filled-by-O-E-M</span><span style="color:#cccccc;font-weight:400">:</span><span style="color:#3b8eea;font-weight:700">/var/www/html/raghav/demo/backend</span><span style="color:#cccccc;font-weight:400">$ </span><span style="color:#cccccc;font-weight:400">npm run dev</span></div>
<div class="t" style="left:316px;top:573.05px;font-size:11.67px;font-family:'Liberation Mono', monospace;transform:scaleY(1.08);transform-origin:0 9px"><span style="color:#cccccc;font-weight:400">&gt; create-nodejs-express-app@1.7.0 dev</span></div>
<div class="t" style="left:316px;top:588.05px;font-size:11.67px;font-family:'Liberation Mono', monospace;transform:scaleY(1.08);transform-origin:0 9px"><span style="color:#cccccc;font-weight:400">&gt; cross-env NODE_ENV=development nodemon src/index.js</span></div>
<div class="t" style="left:316px;top:618.05px;font-size:11.67px;font-family:'Liberation Mono', monospace;transform:scaleY(1.08);transform-origin:0 9px"><span style="color:#e5e510;font-weight:400">[nodemon] 2.0.9</span></div>
<div class="t" style="left:316px;top:633.05px;font-size:11.67px;font-family:'Liberation Mono', monospace;transform:scaleY(1.08);transform-origin:0 9px"><span style="color:#e5e510;font-weight:400">[nodemon] to restart at any time, enter `rs`</span></div>
<div class="t" style="left:316px;top:648.05px;font-size:11.67px;font-family:'Liberation Mono', monospace;transform:scaleY(1.08);transform-origin:0 9px"><span style="color:#e5e510;font-weight:400">[nodemon] watching path(s): *.*</span></div>
<div class="t" style="left:316px;top:663.05px;font-size:11.67px;font-family:'Liberation Mono', monospace;transform:scaleY(1.08);transform-origin:0 9px"><span style="color:#e5e510;font-weight:400">[nodemon] watching extensions: js,mjs,json</span></div>
<div class="t" style="left:316px;top:678.05px;font-size:11.67px;font-family:'Liberation Mono', monospace;transform:scaleY(1.08);transform-origin:0 9px"><span style="color:#1db57a;font-weight:400">[nodemon] starting `node src/index.js`</span></div>
<div class="t" style="left:316px;top:693.05px;font-size:11.67px;font-family:'Liberation Mono', monospace;transform:scaleY(1.08);transform-origin:0 9px"><span style="color:#1db57a;font-weight:400">info</span><span style="color:#cccccc;font-weight:400">: Connected to MongoDB</span></div>
<div class="t" style="left:316px;top:708.05px;font-size:11.67px;font-family:'Liberation Mono', monospace;transform:scaleY(1.08);transform-origin:0 9px"><span style="color:#1db57a;font-weight:400">info</span><span style="color:#cccccc;font-weight:400">: Listening to port 3000</span></div>
<div class="t" style="left:316px;top:723.05px;font-size:11.67px;font-family:'Liberation Mono', monospace;transform:scaleY(1.08);transform-origin:0 9px"><span style="color:#e5e510;font-weight:400">warn</span><span style="color:#cccccc;font-weight:400">: Unable to connect to email server. Make sure you have configured the SMTP options in .env</span></div>
<div class="r" style="left:316px;top:735.5px;width:7px;height:13px;background:#cccccc;"></div>
<div class="r" style="left:1254.5px;top:419.5px;width:1px;height:330px;background:#000000;"></div>
<div class="r" style="left:1255.5px;top:639px;width:9px;height:110.5px;background:#3c3c3c;"></div>
<div class="r" style="left:1256px;top:477px;width:2.5px;height:4px;background:#6a6a6a;"></div>
<div class="r" style="left:1256px;top:512px;width:2.5px;height:4px;background:#6a6a6a;"></div>
<div class="r" style="left:1261.5px;top:481px;width:3px;height:4px;background:#e05050;"></div>
<div class="r" style="left:1261.5px;top:420px;width:3px;height:3px;background:#e05050;"></div>
<div class="r" style="left:1265px;top:413px;width:1px;height:337px;background:#2b2b2b;"></div>
<div class="r" style="left:1266px;top:413.4px;width:100px;height:17.6px;background:#37373d;"></div>
<div class="r" style="left:1266px;top:413.4px;width:1.5px;height:17.6px;background:#0078d4;"></div>
<svg class="r" style="left:1275px;top:415.5px;" width="12" height="13" viewBox="0 0 12 13"><path d="M6 0.7 L11.3 3.6 V9.4 L6 12.3 L0.7 9.4 V3.6 Z" fill="none" stroke="#f14c4c" stroke-width="0.8" opacity="0.8"/><path d="M6.5 6 L11 3.8 V9.3 L6.5 11.8Z" fill="#f14c4c"/></svg>
<svg class="r" style="left:1275px;top:433.8px;" width="12" height="13" viewBox="0 0 12 13"><path d="M6 0.7 L11.3 3.6 V9.4 L6 12.3 L0.7 9.4 V3.6 Z" fill="none" stroke="#23d18b" stroke-width="0.8" opacity="0.8"/><path d="M6.5 6 L11 3.8 V9.3 L6.5 11.8Z" fill="#23d18b"/></svg>
<svg class="r" style="left:1275px;top:452.1px;" width="12" height="13" viewBox="0 0 12 13"><path d="M6 0.7 L11.3 3.6 V9.4 L6 12.3 L0.7 9.4 V3.6 Z" fill="none" stroke="#e5e5e5" stroke-width="0.8" opacity="0.8"/><path d="M6.5 6 L11 3.8 V9.3 L6.5 11.8Z" fill="#e5e5e5"/></svg>
<div class="t" style="left:1290px;top:416.27px;font-size:11.5px;color:#e0e0e0;font-weight:400;font-family:'Liberation Sans', sans-serif;">npm</div>
<div class="t" style="left:1317px;top:417.96px;font-size:9.5px;color:#a9a9a9;font-weight:400;font-family:'Liberation Sans', sans-serif;">backend</div>
<div class="t" style="left:1290px;top:434.57px;font-size:11.5px;color:#cccccc;font-weight:400;font-family:'Liberation Sans', sans-serif;">bash</div>
<div class="t" style="left:1318.5px;top:436.04px;font-size:10px;color:#a0a0a0;font-weight:400;font-family:'Liberation Sans', sans-serif;letter-spacing:0.25px">front...</div>
<div class="t" style="left:1290px;top:452.87px;font-size:11.5px;color:#cccccc;font-weight:400;font-family:'Liberation Sans', sans-serif;">bash</div>
<div class="t" style="left:1318.5px;top:454.34px;font-size:10px;color:#a0a0a0;font-weight:400;font-family:'Liberation Sans', sans-serif;letter-spacing:0.25px">front...</div>
<div class="r" style="left:72px;top:749.7px;width:1294px;height:18.3px;background:#181818;"></div>
<div class="r" style="left:72px;top:749.7px;width:1294px;height:1px;background:#2b2b2b;"></div>
<div class="r" style="left:72px;top:749.7px;width:28px;height:18.3px;background:#0078d4;"></div>
<svg class="r" style="left:81px;top:754px;" width="10" height="10" viewBox="0 0 10 10"><path d="M0.6 3.2 L4 6.6 L0.6 10 M9.4 0.4 L6 3.8 L9.4 7.2" stroke="#ffffff" stroke-width="1.1" fill="none"/></svg>
<svg class="r" style="left:107px;top:752.5px;" width="9" height="12" viewBox="0 0 9 12"><circle cx="2" cy="2" r="1.6" fill="none" stroke="#ccc" stroke-width="1"/><circle cx="2" cy="10" r="1.6" fill="none" stroke="#ccc" stroke-width="1"/><circle cx="7.3" cy="4" r="1.6" fill="none" stroke="#ccc" stroke-width="1"/><path d="M2 3.6 V8.4 M7.3 5.6 Q7.3 8 2.8 8.6" stroke="#ccc" stroke-width="1" fill="none"/></svg>
<div class="t" style="left:119.6px;top:752.93px;font-size:10px;color:#cccccc;font-weight:400;font-family:'Liberation Sans', sans-serif;">master*</div>
<svg class="r" style="left:161.5px;top:753px;" width="11" height="11" viewBox="0 0 11 11"><path d="M8.7 3.5 A4.2 4.2 0 0 0 1 5 M1.3 7.5 A4.2 4.2 0 0 0 9 6" stroke="#ccc" stroke-width="1.1" fill="none"/><path d="M8.9 0.8 V3.8 H6" stroke="#ccc" stroke-width="1.1" fill="none"/><path d="M1.1 10.2 V7.2 H4" stroke="#ccc" stroke-width="1.1" fill="none"/></svg>
<svg class="r" style="left:184px;top:753.5px;" width="10" height="10" viewBox="0 0 10 10"><circle cx="5" cy="5" r="4.4" fill="none" stroke="#ccc" stroke-width="1"/><path d="M3 3 L7 7 M7 3 L3 7" stroke="#ccc" stroke-width="1"/></svg>
<div class="t" style="left:199px;top:752.93px;font-size:10px;color:#cccccc;font-weight:400;font-family:'Liberation Sans', sans-serif;">1</div>
<svg class="r" style="left:205px;top:753px;" width="11" height="10" viewBox="0 0 11 10"><path d="M5.5 0.7 L10.4 9.4 H0.6 Z" fill="none" stroke="#ccc" stroke-width="1" stroke-linejoin="round"/><path d="M5.5 3.5 V6.5 M5.5 7.5 V8.4" stroke="#ccc" stroke-width="1"/></svg>
<div class="t" style="left:219.8px;top:752.93px;font-size:10px;color:#cccccc;font-weight:400;font-family:'Liberation Sans', sans-serif;">0</div>
<svg class="r" style="left:240px;top:753.5px;" width="11" height="10" viewBox="0 0 11 10"><circle cx="5.5" cy="4" r="1.2" fill="#ccc"/><path d="M3 1.5 Q1.5 4 3 6.5 M8 1.5 Q9.5 4 8 6.5 M1.3 0.3 Q-1 4 1.3 7.7 M9.7 0.3 Q12 4 9.7 7.7 M5.5 5 L3.5 9.7 M5.5 5 L7.5 9.7" stroke="#ccc" stroke-width="0.9" fill="none"/></svg>
<div class="t" style="left:254px;top:752.93px;font-size:10px;color:#cccccc;font-weight:400;font-family:'Liberation Sans', sans-serif;">0</div>
<svg class="r" style="left:273.5px;top:752.5px;" width="9" height="11" viewBox="0 0 9 11"><path d="M6.5 0 L0.5 6.3 H4.2 L2.3 11 L8.6 4.5 H5 Z" fill="#f0c33c"/></svg>
<div class="t" style="left:287px;top:752.93px;font-size:10px;color:#cccccc;font-weight:400;font-family:'Liberation Sans', sans-serif;letter-spacing:-0.35px">BLACKBOX Chat</div>
<div class="t" style="left:375px;top:752.93px;font-size:10px;color:#cccccc;font-weight:400;font-family:'Liberation Sans', sans-serif;">Add Logs</div>
<div class="t" style="left:430px;top:752.93px;font-size:10px;color:#f2b233;font-weight:400;font-family:'Liberation Sans', sans-serif;">👉</div>
<svg class="r" style="left:430px;top:753.5px;" width="12" height="10" viewBox="0 0 12 10"><path d="M0.5 3 H6 L5 1 Q5.5 0.3 6.5 1 L11.5 4.5 Q11.8 5 11.5 5.5 L8.5 9.5 H1.5 Q0.5 9.5 0.5 8.5Z" fill="#f4b23a"/><path d="M3 4.5 H10" stroke="#c9851e" stroke-width="0.8"/></svg>
<div class="t" style="left:444px;top:752.93px;font-size:10px;color:#cccccc;font-weight:400;font-family:'Liberation Sans', sans-serif;">CyberCoder</div>
<div class="t" style="left:511px;top:752.93px;font-size:10px;color:#cccccc;font-weight:400;font-family:'Liberation Sans', sans-serif;">Improve Code</div>
<div class="t" style="left:588px;top:752.93px;font-size:10px;color:#cccccc;font-weight:400;font-family:'Liberation Sans', sans-serif;">Share Code Link</div>
<div class="t" style="left:697.5px;top:752.93px;font-size:10px;color:#cccccc;font-weight:400;font-family:'Liberation Sans', sans-serif;">UTF-8</div>
<div class="t" style="left:737px;top:752.93px;font-size:10px;color:#cccccc;font-weight:400;font-family:'Liberation Sans', sans-serif;">LF</div>
<div class="t" style="left:760px;top:752.93px;font-size:10px;color:#cccccc;font-weight:400;font-family:'Liberation Sans', sans-serif;">{ }</div>
<div class="t" style="left:775.5px;top:752.93px;font-size:10px;color:#cccccc;font-weight:400;font-family:'Liberation Sans', sans-serif;">TypeScript JSX</div>
<svg class="r" style="left:857px;top:752.5px;" width="9" height="11" viewBox="0 0 9 11"><path d="M6.5 0 L0.5 6.3 H4.2 L2.3 11 L8.6 4.5 H5 Z" fill="#f0c33c"/></svg>
<div class="t" style="left:870px;top:752.93px;font-size:10px;color:#cccccc;font-weight:400;font-family:'Liberation Sans', sans-serif;letter-spacing:-0.3px">BLACKBOXAI: Open Chat</div>
<svg class="r" style="left:997px;top:753px;" width="12" height="12" viewBox="0 0 12 12"><circle cx="3.5" cy="3.5" r="2.5" fill="none" stroke="#ccc" stroke-width="1"/><circle cx="7.5" cy="3.5" r="2.5" fill="none" stroke="#ccc" stroke-width="1"/><path d="M1 6 Q1 10 5 10" stroke="#ccc" stroke-width="1" fill="none"/><circle cx="8.5" cy="8.5" r="3.2" fill="#ccc"/><path d="M8.5 7 V10" stroke="#181818" stroke-width="1"/></svg>
<div class="r" style="left:1015.3px;top:750.2px;width:86.5px;height:17.8px;background:#7a6400;"></div>
<div class="t" style="left:1023.6px;top:752.93px;font-size:10px;color:#ffffff;font-weight:400;font-family:'Liberation Sans', sans-serif;">Codeium: Login</div>
<div class="t" style="left:1112px;top:754.2px;font-size:9.5px;font-weight:400;color:#d0d0d0;font-family:'Liberation Sans', sans-serif;letter-spacing:0.1px;transform:scale(1.08,1);transform-origin:left top">CODEGPT</div>
<svg class="r" style="left:1166.5px;top:753px;" width="11.5" height="10" viewBox="0 0 11.5 10"><path d="M5.75 0.7 L11 9.4 H0.5 Z" fill="none" stroke="#ccc" stroke-width="1" stroke-linejoin="round"/><path d="M5.75 3.6 V6.6 M5.75 7.4 V8.4" stroke="#ccc" stroke-width="1"/></svg>
<div class="r" style="left:1185px;top:750.2px;width:150px;height:17.8px;background:#7a6400;"></div>
<svg class="r" style="left:1193.5px;top:753.5px;" width="9" height="9" viewBox="0 0 9 9"><path d="M4.5 0.6 L8.2 2.7 V6.3 L4.5 8.4 L0.8 6.3 V2.7Z" fill="none" stroke="#f0f0f0" stroke-width="1.3" stroke-dasharray="3 0.6"/></svg>
<div class="t" style="left:1204.5px;top:752.93px;font-size:10px;color:#ffffff;font-weight:400;font-family:'Liberation Sans', sans-serif;">Tabnine: Sign-in is required</div>
<svg class="r" style="left:1342px;top:752.5px;" width="13" height="12" viewBox="0 0 13 12"><path d="M2 9 Q2.5 8 2.5 5.5 Q2.5 1.5 6.5 1.2 Q10.5 1.5 10.5 5.5 Q10.5 8 11 9 Z" fill="none" stroke="#ccc" stroke-width="1.1"/><path d="M5 10.5 Q6.5 12 8 10.5" stroke="#ccc" stroke-width="1" fill="none"/><circle cx="10.5" cy="2.5" r="2" fill="#ccc"/></svg>
</body></html>
